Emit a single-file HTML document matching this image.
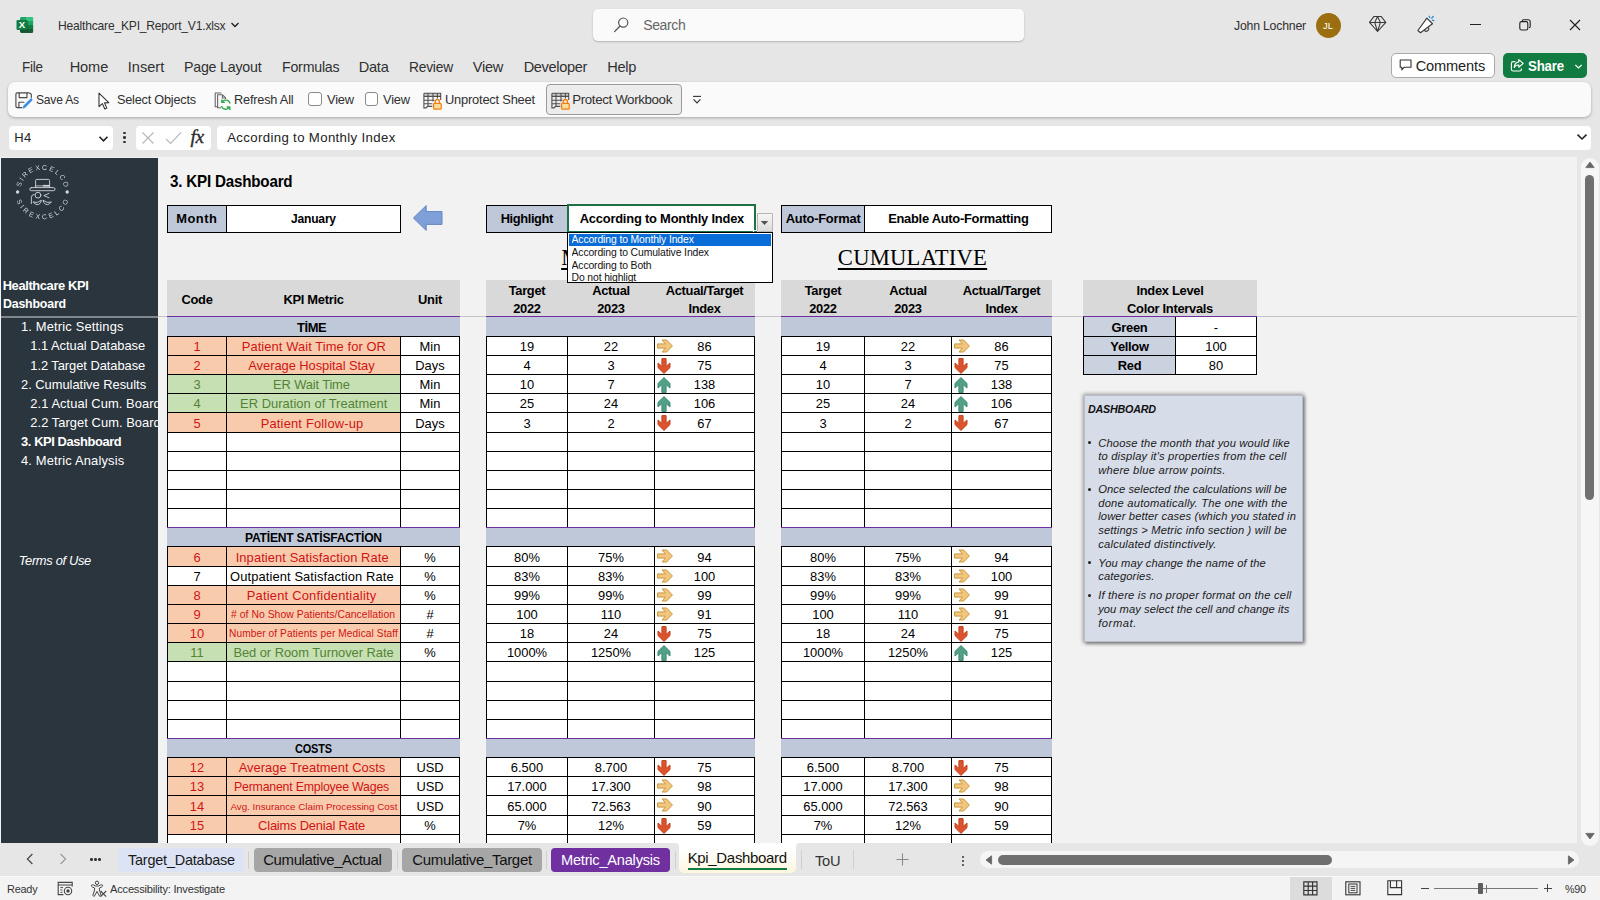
<!DOCTYPE html>
<html lang="en"><head><meta charset="utf-8"><title>Healthcare_KPI_Report_V1.xlsx - Excel</title>
<style>
html,body{margin:0;padding:0}
body{width:1600px;height:900px;position:relative;overflow:hidden;background:#e6e6e6;font-family:'Liberation Sans',sans-serif;font-size:13px;color:#000}
div{position:absolute;box-sizing:border-box}
svg{overflow:visible}
.dd{left:3.5px;height:12.6px;line-height:13px;font-size:10.4px;color:#111;white-space:nowrap;overflow:hidden;width:198px;letter-spacing:-.12px}
</style></head>
<body>
<svg style="position:absolute;left:15px;top:15px" width="20" height="19" viewBox="0 0 20 19">
<defs><clipPath id="xlc"><rect x="5" y="1.9" width="13.4" height="16.1" rx="1.4"/></clipPath></defs>
<g clip-path="url(#xlc)">
<rect x="5" y="1.9" width="6.7" height="4.1" fill="#21a366"/><rect x="11.7" y="1.9" width="6.7" height="4.1" fill="#33c481"/>
<rect x="5" y="6" width="6.7" height="4" fill="#107c41"/><rect x="11.7" y="6" width="6.7" height="4" fill="#21a366"/>
<rect x="5" y="10" width="6.7" height="4" fill="#185c37"/><rect x="11.7" y="10" width="6.7" height="4" fill="#107c41"/>
<rect x="5" y="14" width="13.4" height="4" fill="#185c37"/>
<rect x="5" y="5.6" width="8.2" height="10.6" rx="1" fill="#000" opacity=".18"/>
</g>
<rect x="1.5" y="5" width="11" height="10" rx="1.1" fill="#107c41"/>
<text x="6.95" y="13.35" font-family="'Liberation Sans',sans-serif" font-size="9.6" font-weight="700" fill="#fff" text-anchor="middle">X</text>
</svg>
<div style="left:57.70px;top:15.50px;height:20px;line-height:20px;font-size:13.2px;color:#303030;white-space:nowrap;letter-spacing:-0.22px;transform:scaleX(0.916);transform-origin:0 50%;">Healthcare_KPI_Report_V1.xlsx</div>
<svg style="position:absolute;left:230px;top:21px" width="10" height="8" viewBox="0 0 10 8"><path d="M1.5 2 L5 5.5 L8.5 2" fill="none" stroke="#222" stroke-width="1.4"/></svg>
<div style="left:592.5px;top:9px;width:431.5px;height:32px;background:#fafafa;border-radius:5px;box-shadow:0 1px 2px rgba(0,0,0,.22)"></div>
<svg style="position:absolute;left:613px;top:16px" width="17" height="17" viewBox="0 0 17 17"><circle cx="10.2" cy="6.6" r="4.6" fill="none" stroke="#555" stroke-width="1.2"/><path d="M7 10 L1.6 15.6" stroke="#555" stroke-width="1.3" stroke-linecap="round"/></svg>
<div style="left:643.20px;top:14.50px;height:20px;line-height:20px;font-size:14px;color:#666;white-space:nowrap;letter-spacing:-0.352px;">Search</div>
<div style="left:1234.20px;top:15.50px;height:20px;line-height:20px;font-size:13.2px;color:#303030;white-space:nowrap;letter-spacing:-0.22px;transform:scaleX(0.9303);transform-origin:0 50%;">John Lochner</div>
<div style="left:1315.5px;top:12.5px;width:25px;height:25px;background:#9b6f10;border-radius:50%"></div>
<div style="left:1315.5px;top:15.50px;width:25.0px;height:20px;line-height:20px;text-align:center;font-size:9.5px;font-weight:400;color:#fff;white-space:nowrap;">JL</div>
<svg style="position:absolute;left:1368px;top:15px" width="19" height="18" viewBox="0 0 19 18"><path d="M6 1.4 H13.1 L17.8 7.4 L9.55 16.5 L1.5 7.4 Z M1.5 7.4 H17.8 M6.7 7.4 L9.55 16.5 L12.4 7.4 M6.7 7.4 L9.55 1.4 L12.4 7.4" fill="none" stroke="#3a3a3a" stroke-width="1.05" stroke-linejoin="round"/></svg>
<svg style="position:absolute;left:1416px;top:15px" width="20" height="20" viewBox="0 0 20 20"><path d="M8.2 15 A2.3 2.3 0 0 0 12.4 12.4" fill="none" stroke="#3a3a3a" stroke-width="1.1"/><path d="M10.9 3.1 L16.5 8.75 L4.5 17.75 L1.9 15.5 Z" fill="#fff" stroke="#3a3a3a" stroke-width="1.15" stroke-linejoin="round"/><path d="M13.2 1.2 L13.8 2.5 M17.2 1.5 L15.7 3.2 M17.8 5.6 L16.4 5.1" stroke="#1a86d8" stroke-width="1.2" stroke-linecap="round"/></svg>
<div style="left:1470px;top:24px;width:10.5px;height:1.2px;background:#222"></div>
<svg style="position:absolute;left:1519px;top:19px" width="12" height="12" viewBox="0 0 12 12"><rect x="0.8" y="2.6" width="8" height="8.4" rx="1.8" fill="none" stroke="#222" stroke-width="1.1"/><path d="M3.2 2.4 V2 Q3.2 0.7 4.6 0.7 H9.2 Q11.2 0.7 11.2 2.7 V7.4 Q11.2 8.6 10 8.6" fill="none" stroke="#222" stroke-width="1.1"/></svg>
<svg style="position:absolute;left:1569px;top:19px" width="12" height="12" viewBox="0 0 12 12"><path d="M1 1 L11 11 M11 1 L1 11" stroke="#222" stroke-width="1.15"/></svg>
<div style="left:22.20px;top:56.50px;height:20px;line-height:20px;font-size:14.6px;color:#303030;white-space:nowrap;letter-spacing:-0.22px;transform:scaleX(0.9232);transform-origin:0 50%;">File</div>
<div style="left:69.70px;top:56.50px;height:20px;line-height:20px;font-size:14.6px;color:#303030;white-space:nowrap;letter-spacing:-0.112px;">Home</div>
<div style="left:127.70px;top:56.50px;height:20px;line-height:20px;font-size:14.6px;color:#303030;white-space:nowrap;letter-spacing:0.02px;">Insert</div>
<div style="left:183.70px;top:56.50px;height:20px;line-height:20px;font-size:14.6px;color:#303030;white-space:nowrap;letter-spacing:-0.22px;transform:scaleX(0.9728);transform-origin:0 50%;">Page Layout</div>
<div style="left:281.70px;top:56.50px;height:20px;line-height:20px;font-size:14.6px;color:#303030;white-space:nowrap;letter-spacing:-0.22px;transform:scaleX(0.9715);transform-origin:0 50%;">Formulas</div>
<div style="left:358.70px;top:56.50px;height:20px;line-height:20px;font-size:14.6px;color:#303030;white-space:nowrap;letter-spacing:-0.243px;">Data</div>
<div style="left:408.70px;top:56.50px;height:20px;line-height:20px;font-size:14.6px;color:#303030;white-space:nowrap;letter-spacing:-0.22px;transform:scaleX(0.9431);transform-origin:0 50%;">Review</div>
<div style="left:472.70px;top:56.50px;height:20px;line-height:20px;font-size:14.6px;color:#303030;white-space:nowrap;letter-spacing:-0.258px;">View</div>
<div style="left:523.70px;top:56.50px;height:20px;line-height:20px;font-size:14.6px;color:#303030;white-space:nowrap;letter-spacing:-0.366px;">Developer</div>
<div style="left:607.20px;top:56.50px;height:20px;line-height:20px;font-size:14.6px;color:#303030;white-space:nowrap;letter-spacing:-0.305px;">Help</div>
<div style="left:1391px;top:53px;width:103.5px;height:25px;background:#fff;border:1px solid #a9a9a9;border-radius:5px"></div>
<svg style="position:absolute;left:1399px;top:59px" width="14" height="13" viewBox="0 0 14 13"><path d="M1.2 1 H12 V8.2 H5.2 L2.8 10.8 V8.2 H1.2 Z" fill="none" stroke="#333" stroke-width="1.1" stroke-linejoin="round"/></svg>
<div style="left:1415.70px;top:56.00px;height:20px;line-height:20px;font-size:14.6px;color:#222;white-space:nowrap;letter-spacing:-0.138px;">Comments</div>
<div style="left:1503.3px;top:53px;width:84.2px;height:25px;background:#107c41;border-radius:5px"></div>
<svg style="position:absolute;left:1510px;top:58px" width="15" height="15" viewBox="0 0 15 15"><path d="M5.4 3.6 H3.2 Q1.4 3.6 1.4 5.4 V11.2 Q1.4 13 3.2 13 H9.6 Q11.4 13 11.4 11.2 V10.4" fill="none" stroke="#fff" stroke-width="1.15"/><path d="M8.8 1.6 L13.2 5.4 L8.8 9.2 V7 Q5.6 6.8 4.2 9.6 Q4.4 4.6 8.8 3.9 Z" fill="none" stroke="#fff" stroke-width="1.15" stroke-linejoin="round"/></svg>
<div style="left:1528.20px;top:56.00px;height:20px;line-height:20px;font-size:14.6px;color:#fff;white-space:nowrap;font-weight:700;letter-spacing:-0.22px;transform:scaleX(0.9097);transform-origin:0 50%;-webkit-text-stroke:0;">Share</div>
<svg style="position:absolute;left:1574px;top:63px" width="9" height="7" viewBox="0 0 9 7"><path d="M1.3 1.8 L4.5 5 L7.7 1.8" fill="none" stroke="#fff" stroke-width="1.2"/></svg>
<div style="left:8px;top:82px;width:1583px;height:34.5px;background:#fafafa;border-radius:7px;box-shadow:0 1px 3px rgba(0,0,0,.28)"></div>
<svg style="position:absolute;left:14px;top:90px" width="20" height="20" viewBox="0 0 20 20">
<g fill="none" stroke="#4a4a4a" stroke-width="1.15" stroke-linejoin="round" stroke-linecap="round">
<path d="M8.4 17.6 H3.3 Q1.9 17.6 1.9 16.2 V4.2 Q1.9 2.8 3.3 2.8 H14.6 Q16.3 2.8 17.3 4.4 V8.6"/>
<path d="M5.2 3 V7.6 H13 V3"/><path d="M4.9 17.4 V12.2 H10"/></g>
<path d="M8.3 18.9 L9.1 15.7 L16.3 8.5 Q17.3 7.7 18.3 8.7 Q19.1 9.7 18.3 10.7 L11.3 17.9 Z" fill="#3a8ee6" stroke="#fafafa" stroke-width=".5"/></svg>
<div style="left:36.20px;top:89.50px;height:20px;line-height:20px;font-size:13.3px;color:#303030;white-space:nowrap;letter-spacing:-0.22px;transform:scaleX(0.9078);transform-origin:0 50%;">Save As</div>
<svg style="position:absolute;left:96px;top:91px" width="16" height="20" viewBox="0 0 16 20"><path d="M3 2.2 V15.6 L6.4 12.6 L8.8 18 L10.8 17.1 L8.5 11.9 L12.8 11.6 Z" fill="#fff" stroke="#333" stroke-width="1.1" stroke-linejoin="round"/></svg>
<div style="left:117.20px;top:89.50px;height:20px;line-height:20px;font-size:13.3px;color:#303030;white-space:nowrap;letter-spacing:-0.22px;transform:scaleX(0.9545);transform-origin:0 50%;">Select Objects</div>
<svg style="position:absolute;left:213px;top:90px" width="20" height="21" viewBox="0 0 20 21">
<g fill="none" stroke="#666" stroke-width="1.1" stroke-linejoin="round">
<path d="M4 16.8 H2.2 V3 H8.4"/><path d="M8 17.8 H4.6 V4.8 H9.6 L12.6 7.8 V9"/><path d="M9.4 5 V8 H12.4"/></g>
<g fill="none" stroke="#2fa84f" stroke-width="1.35" stroke-linecap="round" stroke-linejoin="round">
<path d="M16.9 13 A4.4 4.4 0 0 0 9 12.2 M8.8 9.8 V12.4 H11.4"/><path d="M8.7 16.4 A4.4 4.4 0 0 0 16.6 17.2 M16.8 19.6 V17 H14.2"/></g></svg>
<div style="left:233.70px;top:89.50px;height:20px;line-height:20px;font-size:13.3px;color:#303030;white-space:nowrap;letter-spacing:-0.22px;transform:scaleX(0.9598);transform-origin:0 50%;">Refresh All</div>
<div style="left:308.2px;top:92.2px;width:13.6px;height:13.6px;background:#fff;border:1px solid #8a8a8a;border-radius:3px"></div>
<div style="left:326.70px;top:89.50px;height:20px;line-height:20px;font-size:13.3px;color:#303030;white-space:nowrap;letter-spacing:-0.22px;transform:scaleX(0.9702);transform-origin:0 50%;">View</div>
<div style="left:364.8px;top:92.2px;width:13.6px;height:13.6px;background:#fff;border:1px solid #8a8a8a;border-radius:3px"></div>
<div style="left:383.20px;top:89.50px;height:20px;line-height:20px;font-size:13.3px;color:#303030;white-space:nowrap;letter-spacing:-0.22px;transform:scaleX(0.9702);transform-origin:0 50%;">View</div>
<svg style="position:absolute;left:423px;top:91px" width="20" height="20" viewBox="0 0 20 20">
<rect x="0.9" y="2.2" width="16.8" height="3.2" fill="#8a8a8a" opacity=".35"/>
<path d="M0.9 2.2 H17.7 V9 M0.9 2.2 V16.9 H3.2 L4.4 15.4 H9.4 M0.9 5.4 H17.7 M0.9 9.2 H11.4 M0.9 12.8 H9.4 M5 2.2 V15.4 M10 2.2 V10.4 M14.4 2.2 V7.6" fill="none" stroke="#4f4f4f" stroke-width="1.1"/>
<rect x="10.6" y="12.4" width="7.6" height="5.8" rx=".9" fill="#fbdc9a" stroke="#f07f0c" stroke-width="1.2"/><path d="M12.3 12.2 V10.8 Q12.3 8.5 14.4 8.5 Q16.5 8.5 16.5 10.8 V12.2" fill="none" stroke="#f07f0c" stroke-width="1.3"/></svg>
<div style="left:444.70px;top:89.50px;height:20px;line-height:20px;font-size:13.3px;color:#303030;white-space:nowrap;letter-spacing:-0.22px;transform:scaleX(0.9687);transform-origin:0 50%;">Unprotect Sheet</div>
<div style="left:546px;top:83.5px;width:136px;height:31px;background:#ececec;border:1px solid #9a9a9a;border-radius:4px"></div>
<svg style="position:absolute;left:551px;top:91px" width="20" height="20" viewBox="0 0 20 20">
<rect x="0.9" y="2.2" width="16.8" height="3.2" fill="#8a8a8a" opacity=".35"/>
<path d="M0.9 2.2 H17.7 V9 M0.9 2.2 V16.9 H3.2 L4.4 15.4 H9.4 M0.9 5.4 H17.7 M0.9 9.2 H11.4 M0.9 12.8 H9.4 M5 2.2 V15.4 M10 2.2 V10.4 M14.4 2.2 V7.6" fill="none" stroke="#4f4f4f" stroke-width="1.1"/>
<rect x="10.6" y="12.4" width="7.6" height="5.8" rx=".9" fill="#fbdc9a" stroke="#f07f0c" stroke-width="1.2"/><path d="M12.3 12.2 V10.8 Q12.3 8.5 14.4 8.5 Q16.5 8.5 16.5 10.8 V12.2" fill="none" stroke="#f07f0c" stroke-width="1.3"/></svg>
<div style="left:572.20px;top:89.50px;height:20px;line-height:20px;font-size:13.3px;color:#303030;white-space:nowrap;letter-spacing:-0.356px;">Protect Workbook</div>
<svg style="position:absolute;left:692px;top:95px" width="10" height="10" viewBox="0 0 10 10"><path d="M1 1.4 H9" stroke="#333" stroke-width="1.1"/><path d="M1.6 4.4 L5 7.8 L8.4 4.4" fill="none" stroke="#333" stroke-width="1.2"/></svg>
<div style="left:9px;top:126px;width:104px;height:23.5px;background:#fff;border-radius:4px"></div>
<div style="left:14.20px;top:127.50px;height:20px;line-height:20px;font-size:13px;color:#222;white-space:nowrap;letter-spacing:0.475px;">H4</div>
<svg style="position:absolute;left:98.3px;top:134.5px" width="11" height="8" viewBox="0 0 11 8"><path d="M1.5 1.8 L5.5 5.8 L9.5 1.8" fill="none" stroke="#222" stroke-width="1.6"/></svg>
<div style="left:123px;top:131.8px;width:2.6px;height:2.6px;background:#333;border-radius:50%"></div>
<div style="left:123px;top:136.2px;width:2.6px;height:2.6px;background:#333;border-radius:50%"></div>
<div style="left:123px;top:140.6px;width:2.6px;height:2.6px;background:#333;border-radius:50%"></div>
<div style="left:136px;top:126px;width:75px;height:23.5px;background:#fff;border-radius:4px"></div>
<svg style="position:absolute;left:141px;top:131px" width="14" height="14" viewBox="0 0 14 14"><path d="M1.5 1.5 L12.5 12.5 M12.5 1.5 L1.5 12.5" stroke="#b8b8b8" stroke-width="1.2"/></svg>
<svg style="position:absolute;left:165px;top:131px" width="17" height="14" viewBox="0 0 17 14"><path d="M1 8 L5.6 12.4 L16 1.4" fill="none" stroke="#b8b8b8" stroke-width="1.2"/></svg>
<div style="left:190.5px;top:126.6px;width:22px;height:20px;line-height:20px;font-family:'Liberation Serif',serif;font-style:italic;font-size:19.5px;color:#2a2a2a;letter-spacing:-.3px;-webkit-text-stroke:.35px #2a2a2a">fx</div>
<div style="left:217px;top:126px;width:1374px;height:23.5px;background:#fff;border-radius:4px"></div>
<div style="left:227.20px;top:127.50px;height:20px;line-height:20px;font-size:13.2px;color:#222;white-space:nowrap;letter-spacing:0.361px;">According to Monthly Index</div>
<svg style="position:absolute;left:1576px;top:133px" width="12" height="8" viewBox="0 0 12 8"><path d="M1.5 1.6 L6 6 L10.5 1.6" fill="none" stroke="#222" stroke-width="1.6"/></svg>
<div style="left:0px;top:157px;width:1577.3px;height:686px;background:#f2f2f2"></div>
<div style="left:1px;top:157.5px;width:156.5px;height:686px;background:#2b353e"></div>
<svg style="position:absolute;left:12px;top:162px;will-change:transform" width="60" height="60" viewBox="12 162 60 60" font-family="'Liberation Sans',sans-serif" fill="#d3d7da">
<defs><path id="arcT" d="M 20.96 186.23 A 22.3 22.3 0 0 1 64.04 186.23"/><path id="arcB" d="M 16.13 199.07 A 27.3 27.3 0 0 0 68.87 199.07"/></defs>
<text font-size="6.9" letter-spacing="1.75" text-anchor="middle" opacity=".99"><textPath href="#arcT" startOffset="51.6%">SIREXCELCO</textPath></text>
<text font-size="6.9" letter-spacing="2.6" text-anchor="middle" opacity=".99"><textPath href="#arcB" startOffset="51.8%">SIREXCELCO</textPath></text>
<circle cx="17.6" cy="192" r="1.7"/><circle cx="67.2" cy="192" r="1.7"/>
<g fill="none" stroke="#d3d7da" stroke-width="0.9" stroke-linejoin="round" stroke-linecap="round">
<path d="M35.6 187.4 V180.6 Q35.6 179.4 36.8 179.4 H48.4 Q49.6 179.4 49.6 180.6 V187.4"/>
<rect x="29.8" y="187.6" width="25.2" height="3.1" rx="1.55"/>
<path d="M35.8 185.9 H49.4" stroke-width="0.8"/><path d="M43 185.7 H49.4" stroke-width="1.6" stroke-linecap="butt"/>
<circle cx="38" cy="195.2" r="2.9"/>
<path d="M31.4 203.6 V197.2 Q31.4 194.6 34.2 194.4"/>
<path d="M49 193.4 L43.8 195.6 L49 197.8"/>
<path d="M33.4 202.2 Q37.6 203.6 41.4 200.2 Q40.6 204.6 37 204.6 Q34.6 204.4 33.4 202.2 Z"/>
<path d="M51 202.2 Q46.8 203.6 43 200.2 Q43.8 204.6 47.4 204.6 Q49.8 204.4 51 202.2 Z"/>
</g></svg>
<div style="left:2.70px;top:275.50px;height:20px;line-height:20px;font-size:12.9px;color:#fff;white-space:nowrap;font-weight:700;letter-spacing:-0.377px;">Healthcare KPI</div>
<div style="left:2.70px;top:293.50px;height:20px;line-height:20px;font-size:12.9px;color:#fff;white-space:nowrap;font-weight:700;letter-spacing:-0.22px;transform:scaleX(0.9621);transform-origin:0 50%;">Dashboard</div>
<div style="left:1px;top:317px;width:156.5px;height:160px;overflow:hidden">
<div style="left:20.00px;top:0.20px;height:20px;line-height:20px;font-size:12.9px;color:#fff;white-space:nowrap;letter-spacing:0.171px;">1. Metric Settings</div>
<div style="left:29.30px;top:19.35px;height:20px;line-height:20px;font-size:12.9px;color:#fff;white-space:nowrap;letter-spacing:-0.027px;">1.1 Actual Database</div>
<div style="left:29.30px;top:38.50px;height:20px;line-height:20px;font-size:12.9px;color:#fff;white-space:nowrap;letter-spacing:-0.053px;">1.2 Target Database</div>
<div style="left:20.00px;top:57.65px;height:20px;line-height:20px;font-size:12.9px;color:#fff;white-space:nowrap;letter-spacing:-0.015px;">2. Cumulative Results</div>
<div style="left:29.30px;top:76.80px;height:20px;line-height:20px;font-size:12.9px;color:#fff;white-space:nowrap;letter-spacing:0.076px;">2.1 Actual Cum. Board</div>
<div style="left:29.30px;top:95.95px;height:20px;line-height:20px;font-size:12.9px;color:#fff;white-space:nowrap;letter-spacing:0.052px;">2.2 Target Cum. Board</div>
<div style="left:20.00px;top:115.10px;height:20px;line-height:20px;font-size:12.9px;color:#fff;white-space:nowrap;font-weight:700;letter-spacing:-0.402px;">3. KPI Dashboard</div>
<div style="left:20.00px;top:134.25px;height:20px;line-height:20px;font-size:12.9px;color:#fff;white-space:nowrap;letter-spacing:0.171px;">4. Metric Analysis</div>
</div>
<div style="left:18.70px;top:550.50px;height:20px;line-height:20px;font-size:12.9px;color:#fff;white-space:nowrap;font-style:italic;letter-spacing:-0.326px;">Terms of Use</div>
<div style="left:169.70px;top:170.60px;height:20px;line-height:20px;font-size:16.4px;color:#000;white-space:nowrap;font-weight:700;letter-spacing:-0.22px;transform:scaleX(0.9259);transform-origin:0 50%;">3. KPI Dashboard</div>
<div style="left:167px;top:205px;width:234px;height:28px;background:#fff;border:1px solid #000"></div>
<div style="left:168px;top:206px;width:58px;height:26px;background:#bfc8d9"></div>
<div style="left:226px;top:205px;width:1px;height:28px;background:#000"></div>
<div style="left:176.20px;top:208.50px;height:20px;line-height:20px;font-size:12.9px;color:#000;white-space:nowrap;font-weight:700;letter-spacing:0.486px;">Month</div>
<div style="left:290.70px;top:208.50px;height:20px;line-height:20px;font-size:12.9px;color:#000;white-space:nowrap;font-weight:700;letter-spacing:-0.22px;transform:scaleX(0.937);transform-origin:0 50%;">January</div>
<svg style="position:absolute;left:412px;top:204px" width="32" height="28" viewBox="0 0 32 28"><path d="M1.4 14 L14.2 1.6 V7.6 H30 V20.4 H14.2 V26.4 Z" fill="#7f9fd8" stroke="#6486c4" stroke-width="1"/></svg>
<div style="left:486px;top:205px;width:269px;height:28px;background:#fff;border:1px solid #000"></div>
<div style="left:487px;top:206px;width:80px;height:26px;background:#bfc8d9"></div>
<div style="left:567px;top:205px;width:1px;height:28px;background:#000"></div>
<div style="left:500.70px;top:208.50px;height:20px;line-height:20px;font-size:12.9px;color:#000;white-space:nowrap;font-weight:700;letter-spacing:-0.405px;">Highlight</div>
<div style="left:566.5px;top:203.5px;width:189.5px;height:29.5px;background:#fff;border:2px solid #1e7145"></div>
<div style="left:579.70px;top:208.50px;height:20px;line-height:20px;font-size:12.9px;color:#000;white-space:nowrap;font-weight:700;letter-spacing:-0.205px;">According to Monthly Index</div>
<div style="left:753px;top:229.5px;width:4.5px;height:4.5px;background:#1e7145;border:1px solid #fff"></div>
<div style="left:756.5px;top:213px;width:16px;height:18.5px;background:linear-gradient(#f6f6f6,#dcdcdc);border:1px solid #b4b4b4;border-radius:1px"></div>
<svg style="position:absolute;left:760px;top:220px" width="9" height="6" viewBox="0 0 9 6"><path d="M0.8 1 H8.2 L4.5 5 Z" fill="#555"/></svg>
<div style="left:781px;top:205px;width:271px;height:28px;background:#fff;border:1px solid #000"></div>
<div style="left:782px;top:206px;width:82px;height:26px;background:#bfc8d9"></div>
<div style="left:864px;top:205px;width:1px;height:28px;background:#000"></div>
<div style="left:785.70px;top:208.50px;height:20px;line-height:20px;font-size:12.9px;color:#000;white-space:nowrap;font-weight:700;letter-spacing:-0.224px;">Auto-Format</div>
<div style="left:888.20px;top:208.50px;height:20px;line-height:20px;font-size:12.9px;color:#000;white-space:nowrap;font-weight:700;letter-spacing:-0.273px;">Enable Auto-Formatting</div>
<div style="left:484px;top:242.50px;width:264px;height:30px;line-height:30px;text-align:center;font-size:22.4px;font-weight:400;color:#000;white-space:nowrap;font-family:'Liberation Serif',serif;text-decoration:underline;text-decoration-thickness:1.6px;text-underline-offset:2.5px;">MONTHLY</div>
<div style="left:781px;top:242.50px;width:263px;height:30px;line-height:30px;text-align:center;font-size:22.6px;font-weight:400;color:#000;white-space:nowrap;font-family:'Liberation Serif',serif;letter-spacing:0.25px;text-decoration:underline;text-decoration-thickness:1.6px;text-underline-offset:2.5px;">CUMULATIVE</div>
<div style="left:157.5px;top:316px;width:1419.8px;height:1px;background:#c4c4c4"></div>
<div style="left:1px;top:315.8px;width:156.5px;height:1.8px;background:#80868b"></div>
<div style="left:167px;top:280px;width:293px;height:36px;background:#d9d9d9"></div>
<div style="left:167px;top:316px;width:293px;height:1px;background:#7030a0"></div>
<div style="left:167px;top:289.50px;width:60px;height:20px;line-height:20px;text-align:center;font-size:12.9px;font-weight:700;color:#000;white-space:nowrap;letter-spacing:-0.29px;">Code</div>
<div style="left:226px;top:289.50px;width:175px;height:20px;line-height:20px;text-align:center;font-size:12.9px;font-weight:700;color:#000;white-space:nowrap;letter-spacing:-0.29px;">KPI Metric</div>
<div style="left:400px;top:289.50px;width:60px;height:20px;line-height:20px;text-align:center;font-size:12.9px;font-weight:700;color:#000;white-space:nowrap;letter-spacing:-0.29px;">Unit</div>
<div style="left:486px;top:280px;width:269px;height:36px;background:#d9d9d9"></div>
<div style="left:486px;top:316px;width:269px;height:1px;background:#7030a0"></div>
<div style="left:486px;top:280.50px;width:82px;height:20px;line-height:20px;text-align:center;font-size:12.9px;font-weight:700;color:#000;white-space:nowrap;letter-spacing:-0.29px;">Target</div>
<div style="left:486px;top:298.50px;width:82px;height:20px;line-height:20px;text-align:center;font-size:12.9px;font-weight:700;color:#000;white-space:nowrap;letter-spacing:-0.29px;">2022</div>
<div style="left:567px;top:280.50px;width:88px;height:20px;line-height:20px;text-align:center;font-size:12.9px;font-weight:700;color:#000;white-space:nowrap;letter-spacing:-0.29px;">Actual</div>
<div style="left:567px;top:298.50px;width:88px;height:20px;line-height:20px;text-align:center;font-size:12.9px;font-weight:700;color:#000;white-space:nowrap;letter-spacing:-0.29px;">2023</div>
<div style="left:654px;top:280.50px;width:101px;height:20px;line-height:20px;text-align:center;font-size:12.9px;font-weight:700;color:#000;white-space:nowrap;letter-spacing:-0.29px;">Actual/Target</div>
<div style="left:654px;top:298.50px;width:101px;height:20px;line-height:20px;text-align:center;font-size:12.9px;font-weight:700;color:#000;white-space:nowrap;letter-spacing:-0.29px;">Index</div>
<div style="left:781px;top:280px;width:271px;height:36px;background:#d9d9d9"></div>
<div style="left:781px;top:316px;width:271px;height:1px;background:#7030a0"></div>
<div style="left:781px;top:280.50px;width:84px;height:20px;line-height:20px;text-align:center;font-size:12.9px;font-weight:700;color:#000;white-space:nowrap;letter-spacing:-0.29px;">Target</div>
<div style="left:781px;top:298.50px;width:84px;height:20px;line-height:20px;text-align:center;font-size:12.9px;font-weight:700;color:#000;white-space:nowrap;letter-spacing:-0.29px;">2022</div>
<div style="left:864px;top:280.50px;width:88px;height:20px;line-height:20px;text-align:center;font-size:12.9px;font-weight:700;color:#000;white-space:nowrap;letter-spacing:-0.29px;">Actual</div>
<div style="left:864px;top:298.50px;width:88px;height:20px;line-height:20px;text-align:center;font-size:12.9px;font-weight:700;color:#000;white-space:nowrap;letter-spacing:-0.29px;">2023</div>
<div style="left:951px;top:280.50px;width:101px;height:20px;line-height:20px;text-align:center;font-size:12.9px;font-weight:700;color:#000;white-space:nowrap;letter-spacing:-0.29px;">Actual/Target</div>
<div style="left:951px;top:298.50px;width:101px;height:20px;line-height:20px;text-align:center;font-size:12.9px;font-weight:700;color:#000;white-space:nowrap;letter-spacing:-0.29px;">Index</div>
<div style="left:1083px;top:280px;width:174px;height:36px;background:#d9d9d9"></div>
<div style="left:1083px;top:316px;width:174px;height:1px;background:#7030a0"></div>
<div style="left:1083px;top:280.50px;width:174px;height:20px;line-height:20px;text-align:center;font-size:12.9px;font-weight:700;color:#000;white-space:nowrap;letter-spacing:-0.29px;">Index Level</div>
<div style="left:1083px;top:298.50px;width:174px;height:20px;line-height:20px;text-align:center;font-size:12.9px;font-weight:700;color:#000;white-space:nowrap;letter-spacing:-0.29px;">Color Intervals</div>
<div style="left:1083px;top:317px;width:174px;height:58px;background:#fff;border:1px solid #000;border-top:none"></div>
<div style="left:1084px;top:317px;width:91px;height:57px;background:#cbd2df"></div>
<div style="left:1175px;top:317px;width:1px;height:58px;background:#000"></div>
<div style="left:1083px;top:336px;width:174px;height:1px;background:#000"></div>
<div style="left:1083px;top:355px;width:174px;height:1px;background:#000"></div>
<div style="left:1084px;top:317.50px;width:91px;height:20px;line-height:20px;text-align:center;font-size:12.9px;font-weight:700;color:#000;white-space:nowrap;letter-spacing:-0.29px;">Green</div>
<div style="left:1176px;top:317.50px;width:80px;height:20px;line-height:20px;text-align:center;font-size:12.9px;font-weight:400;color:#000;white-space:nowrap;">-</div>
<div style="left:1084px;top:336.65px;width:91px;height:20px;line-height:20px;text-align:center;font-size:12.9px;font-weight:700;color:#000;white-space:nowrap;letter-spacing:-0.29px;">Yellow</div>
<div style="left:1176px;top:336.65px;width:80px;height:20px;line-height:20px;text-align:center;font-size:12.9px;font-weight:400;color:#000;white-space:nowrap;">100</div>
<div style="left:1084px;top:355.80px;width:91px;height:20px;line-height:20px;text-align:center;font-size:12.9px;font-weight:700;color:#000;white-space:nowrap;letter-spacing:-0.29px;">Red</div>
<div style="left:1176px;top:355.80px;width:80px;height:20px;line-height:20px;text-align:center;font-size:12.9px;font-weight:400;color:#000;white-space:nowrap;">80</div>
<div style="left:167px;top:317px;width:293px;height:19px;background:#bfc8d9"></div>
<div style="left:297.10px;top:317.60px;height:20px;line-height:20px;font-size:12.9px;color:#000;white-space:nowrap;font-weight:700;letter-spacing:-0.399px;">TİME</div>
<div style="left:167px;top:336px;width:293px;height:192px;background:#fff"></div>
<div style="left:486px;top:317px;width:269px;height:19px;background:#bfc8d9"></div>
<div style="left:486px;top:336px;width:269px;height:192px;background:#fff"></div>
<div style="left:781px;top:317px;width:271px;height:19px;background:#bfc8d9"></div>
<div style="left:781px;top:336px;width:271px;height:192px;background:#fff"></div>
<div style="left:167px;top:336px;width:234px;height:19px;background:#f8cbad"></div>
<div style="left:167px;top:337.00px;width:60px;height:20px;line-height:20px;text-align:center;font-size:12.9px;font-weight:400;color:#d01414;white-space:nowrap;">1</div>
<div style="left:241.70px;top:337.00px;height:20px;line-height:20px;font-size:12.9px;color:#d01414;white-space:nowrap;letter-spacing:0.092px;">Patient Wait Time for OR</div>
<div style="left:400px;top:337.00px;width:60px;height:20px;line-height:20px;text-align:center;font-size:12.9px;font-weight:400;color:#000;white-space:nowrap;">Min</div>
<div style="left:486px;top:337.00px;width:82px;height:20px;line-height:20px;text-align:center;font-size:12.9px;font-weight:400;color:#000;white-space:nowrap;">19</div>
<div style="left:567px;top:337.00px;width:88px;height:20px;line-height:20px;text-align:center;font-size:12.9px;font-weight:400;color:#000;white-space:nowrap;">22</div>
<div style="left:654px;top:337.00px;width:101px;height:20px;line-height:20px;text-align:center;font-size:12.9px;font-weight:400;color:#000;white-space:nowrap;">86</div>
<svg style="position:absolute;left:656.9px;top:339.4px" width="16" height="14" viewBox="0 0 16 13.4"><path d="M0.6 4.6 H8.4 L5 0.7 H9.6 L15.4 6.7 L9.6 12.7 H5 L8.4 8.8 H0.6 Z" fill="#f3c680" stroke="#c9983c" stroke-width="1" stroke-linejoin="round"/></svg>
<div style="left:781px;top:337.00px;width:84px;height:20px;line-height:20px;text-align:center;font-size:12.9px;font-weight:400;color:#000;white-space:nowrap;">19</div>
<div style="left:864px;top:337.00px;width:88px;height:20px;line-height:20px;text-align:center;font-size:12.9px;font-weight:400;color:#000;white-space:nowrap;">22</div>
<div style="left:951px;top:337.00px;width:101px;height:20px;line-height:20px;text-align:center;font-size:12.9px;font-weight:400;color:#000;white-space:nowrap;">86</div>
<svg style="position:absolute;left:953.9px;top:339.4px" width="16" height="14" viewBox="0 0 16 13.4"><path d="M0.6 4.6 H8.4 L5 0.7 H9.6 L15.4 6.7 L9.6 12.7 H5 L8.4 8.8 H0.6 Z" fill="#f3c680" stroke="#c9983c" stroke-width="1" stroke-linejoin="round"/></svg>
<div style="left:167px;top:355px;width:234px;height:19px;background:#f8cbad"></div>
<div style="left:167px;top:356.15px;width:60px;height:20px;line-height:20px;text-align:center;font-size:12.9px;font-weight:400;color:#d01414;white-space:nowrap;">2</div>
<div style="left:248.30px;top:356.15px;height:20px;line-height:20px;font-size:12.9px;color:#d01414;white-space:nowrap;letter-spacing:-0.046px;">Average Hospital Stay</div>
<div style="left:400px;top:356.15px;width:60px;height:20px;line-height:20px;text-align:center;font-size:12.9px;font-weight:400;color:#000;white-space:nowrap;">Days</div>
<div style="left:486px;top:356.15px;width:82px;height:20px;line-height:20px;text-align:center;font-size:12.9px;font-weight:400;color:#000;white-space:nowrap;">4</div>
<div style="left:567px;top:356.15px;width:88px;height:20px;line-height:20px;text-align:center;font-size:12.9px;font-weight:400;color:#000;white-space:nowrap;">3</div>
<div style="left:654px;top:356.15px;width:101px;height:20px;line-height:20px;text-align:center;font-size:12.9px;font-weight:400;color:#000;white-space:nowrap;">75</div>
<svg style="position:absolute;left:657.4px;top:358.09999999999997px" width="14" height="16" viewBox="0 0 13.4 16"><g transform="translate(13.4,0) rotate(90)"><path d="M0.6 4.6 H8.4 L5 0.7 H9.6 L15.4 6.7 L9.6 12.7 H5 L8.4 8.8 H0.6 Z" fill="#dc532d" stroke="#c2441f" stroke-width="1" stroke-linejoin="round"/></g></svg>
<div style="left:781px;top:356.15px;width:84px;height:20px;line-height:20px;text-align:center;font-size:12.9px;font-weight:400;color:#000;white-space:nowrap;">4</div>
<div style="left:864px;top:356.15px;width:88px;height:20px;line-height:20px;text-align:center;font-size:12.9px;font-weight:400;color:#000;white-space:nowrap;">3</div>
<div style="left:951px;top:356.15px;width:101px;height:20px;line-height:20px;text-align:center;font-size:12.9px;font-weight:400;color:#000;white-space:nowrap;">75</div>
<svg style="position:absolute;left:954.4px;top:358.09999999999997px" width="14" height="16" viewBox="0 0 13.4 16"><g transform="translate(13.4,0) rotate(90)"><path d="M0.6 4.6 H8.4 L5 0.7 H9.6 L15.4 6.7 L9.6 12.7 H5 L8.4 8.8 H0.6 Z" fill="#dc532d" stroke="#c2441f" stroke-width="1" stroke-linejoin="round"/></g></svg>
<div style="left:167px;top:374px;width:234px;height:19px;background:#c6e0b4"></div>
<div style="left:167px;top:375.30px;width:60px;height:20px;line-height:20px;text-align:center;font-size:12.9px;font-weight:400;color:#548235;white-space:nowrap;">3</div>
<div style="left:273.10px;top:375.30px;height:20px;line-height:20px;font-size:12.9px;color:#548235;white-space:nowrap;letter-spacing:-0.137px;">ER Wait Time</div>
<div style="left:400px;top:375.30px;width:60px;height:20px;line-height:20px;text-align:center;font-size:12.9px;font-weight:400;color:#000;white-space:nowrap;">Min</div>
<div style="left:486px;top:375.30px;width:82px;height:20px;line-height:20px;text-align:center;font-size:12.9px;font-weight:400;color:#000;white-space:nowrap;">10</div>
<div style="left:567px;top:375.30px;width:88px;height:20px;line-height:20px;text-align:center;font-size:12.9px;font-weight:400;color:#000;white-space:nowrap;">7</div>
<div style="left:654px;top:375.30px;width:101px;height:20px;line-height:20px;text-align:center;font-size:12.9px;font-weight:400;color:#000;white-space:nowrap;">138</div>
<svg style="position:absolute;left:657.4px;top:377.09999999999997px" width="14" height="16" viewBox="0 0 13.4 16"><g transform="translate(0,16) rotate(-90)"><path d="M0.6 4.6 H8.4 L5 0.7 H9.6 L15.4 6.7 L9.6 12.7 H5 L8.4 8.8 H0.6 Z" fill="#52a088" stroke="#3e8a72" stroke-width="1" stroke-linejoin="round"/></g></svg>
<div style="left:781px;top:375.30px;width:84px;height:20px;line-height:20px;text-align:center;font-size:12.9px;font-weight:400;color:#000;white-space:nowrap;">10</div>
<div style="left:864px;top:375.30px;width:88px;height:20px;line-height:20px;text-align:center;font-size:12.9px;font-weight:400;color:#000;white-space:nowrap;">7</div>
<div style="left:951px;top:375.30px;width:101px;height:20px;line-height:20px;text-align:center;font-size:12.9px;font-weight:400;color:#000;white-space:nowrap;">138</div>
<svg style="position:absolute;left:954.4px;top:377.09999999999997px" width="14" height="16" viewBox="0 0 13.4 16"><g transform="translate(0,16) rotate(-90)"><path d="M0.6 4.6 H8.4 L5 0.7 H9.6 L15.4 6.7 L9.6 12.7 H5 L8.4 8.8 H0.6 Z" fill="#52a088" stroke="#3e8a72" stroke-width="1" stroke-linejoin="round"/></g></svg>
<div style="left:167px;top:393px;width:234px;height:19px;background:#c6e0b4"></div>
<div style="left:167px;top:394.45px;width:60px;height:20px;line-height:20px;text-align:center;font-size:12.9px;font-weight:400;color:#548235;white-space:nowrap;">4</div>
<div style="left:240.10px;top:394.45px;height:20px;line-height:20px;font-size:12.9px;color:#548235;white-space:nowrap;letter-spacing:0.045px;">ER Duration of Treatment</div>
<div style="left:400px;top:394.45px;width:60px;height:20px;line-height:20px;text-align:center;font-size:12.9px;font-weight:400;color:#000;white-space:nowrap;">Min</div>
<div style="left:486px;top:394.45px;width:82px;height:20px;line-height:20px;text-align:center;font-size:12.9px;font-weight:400;color:#000;white-space:nowrap;">25</div>
<div style="left:567px;top:394.45px;width:88px;height:20px;line-height:20px;text-align:center;font-size:12.9px;font-weight:400;color:#000;white-space:nowrap;">24</div>
<div style="left:654px;top:394.45px;width:101px;height:20px;line-height:20px;text-align:center;font-size:12.9px;font-weight:400;color:#000;white-space:nowrap;">106</div>
<svg style="position:absolute;left:657.4px;top:396.09999999999997px" width="14" height="16" viewBox="0 0 13.4 16"><g transform="translate(0,16) rotate(-90)"><path d="M0.6 4.6 H8.4 L5 0.7 H9.6 L15.4 6.7 L9.6 12.7 H5 L8.4 8.8 H0.6 Z" fill="#52a088" stroke="#3e8a72" stroke-width="1" stroke-linejoin="round"/></g></svg>
<div style="left:781px;top:394.45px;width:84px;height:20px;line-height:20px;text-align:center;font-size:12.9px;font-weight:400;color:#000;white-space:nowrap;">25</div>
<div style="left:864px;top:394.45px;width:88px;height:20px;line-height:20px;text-align:center;font-size:12.9px;font-weight:400;color:#000;white-space:nowrap;">24</div>
<div style="left:951px;top:394.45px;width:101px;height:20px;line-height:20px;text-align:center;font-size:12.9px;font-weight:400;color:#000;white-space:nowrap;">106</div>
<svg style="position:absolute;left:954.4px;top:396.09999999999997px" width="14" height="16" viewBox="0 0 13.4 16"><g transform="translate(0,16) rotate(-90)"><path d="M0.6 4.6 H8.4 L5 0.7 H9.6 L15.4 6.7 L9.6 12.7 H5 L8.4 8.8 H0.6 Z" fill="#52a088" stroke="#3e8a72" stroke-width="1" stroke-linejoin="round"/></g></svg>
<div style="left:167px;top:412px;width:234px;height:20px;background:#f8cbad"></div>
<div style="left:167px;top:413.60px;width:60px;height:20px;line-height:20px;text-align:center;font-size:12.9px;font-weight:400;color:#d01414;white-space:nowrap;">5</div>
<div style="left:260.70px;top:413.60px;height:20px;line-height:20px;font-size:12.9px;color:#d01414;white-space:nowrap;letter-spacing:0.187px;">Patient Follow-up</div>
<div style="left:400px;top:413.60px;width:60px;height:20px;line-height:20px;text-align:center;font-size:12.9px;font-weight:400;color:#000;white-space:nowrap;">Days</div>
<div style="left:486px;top:413.60px;width:82px;height:20px;line-height:20px;text-align:center;font-size:12.9px;font-weight:400;color:#000;white-space:nowrap;">3</div>
<div style="left:567px;top:413.60px;width:88px;height:20px;line-height:20px;text-align:center;font-size:12.9px;font-weight:400;color:#000;white-space:nowrap;">2</div>
<div style="left:654px;top:413.60px;width:101px;height:20px;line-height:20px;text-align:center;font-size:12.9px;font-weight:400;color:#000;white-space:nowrap;">67</div>
<svg style="position:absolute;left:657.4px;top:415.09999999999997px" width="14" height="16" viewBox="0 0 13.4 16"><g transform="translate(13.4,0) rotate(90)"><path d="M0.6 4.6 H8.4 L5 0.7 H9.6 L15.4 6.7 L9.6 12.7 H5 L8.4 8.8 H0.6 Z" fill="#dc532d" stroke="#c2441f" stroke-width="1" stroke-linejoin="round"/></g></svg>
<div style="left:781px;top:413.60px;width:84px;height:20px;line-height:20px;text-align:center;font-size:12.9px;font-weight:400;color:#000;white-space:nowrap;">3</div>
<div style="left:864px;top:413.60px;width:88px;height:20px;line-height:20px;text-align:center;font-size:12.9px;font-weight:400;color:#000;white-space:nowrap;">2</div>
<div style="left:951px;top:413.60px;width:101px;height:20px;line-height:20px;text-align:center;font-size:12.9px;font-weight:400;color:#000;white-space:nowrap;">67</div>
<svg style="position:absolute;left:954.4px;top:415.09999999999997px" width="14" height="16" viewBox="0 0 13.4 16"><g transform="translate(13.4,0) rotate(90)"><path d="M0.6 4.6 H8.4 L5 0.7 H9.6 L15.4 6.7 L9.6 12.7 H5 L8.4 8.8 H0.6 Z" fill="#dc532d" stroke="#c2441f" stroke-width="1" stroke-linejoin="round"/></g></svg>
<div style="left:167px;top:336px;width:293px;height:1px;background:#000"></div>
<div style="left:167px;top:355px;width:293px;height:1px;background:#000"></div>
<div style="left:167px;top:374px;width:293px;height:1px;background:#000"></div>
<div style="left:167px;top:393px;width:293px;height:1px;background:#000"></div>
<div style="left:167px;top:412px;width:293px;height:1px;background:#000"></div>
<div style="left:167px;top:432px;width:293px;height:1px;background:#000"></div>
<div style="left:167px;top:451px;width:293px;height:1px;background:#000"></div>
<div style="left:167px;top:470px;width:293px;height:1px;background:#000"></div>
<div style="left:167px;top:489px;width:293px;height:1px;background:#000"></div>
<div style="left:167px;top:508px;width:293px;height:1px;background:#000"></div>
<div style="left:167px;top:527px;width:293px;height:1px;background:#7030a0"></div>
<div style="left:167px;top:336px;width:1px;height:191px;background:#000"></div>
<div style="left:226px;top:336px;width:1px;height:191px;background:#000"></div>
<div style="left:400px;top:336px;width:1px;height:191px;background:#000"></div>
<div style="left:459px;top:336px;width:1px;height:191px;background:#000"></div>
<div style="left:486px;top:336px;width:269px;height:1px;background:#000"></div>
<div style="left:486px;top:355px;width:269px;height:1px;background:#000"></div>
<div style="left:486px;top:374px;width:269px;height:1px;background:#000"></div>
<div style="left:486px;top:393px;width:269px;height:1px;background:#000"></div>
<div style="left:486px;top:412px;width:269px;height:1px;background:#000"></div>
<div style="left:486px;top:432px;width:269px;height:1px;background:#000"></div>
<div style="left:486px;top:451px;width:269px;height:1px;background:#000"></div>
<div style="left:486px;top:470px;width:269px;height:1px;background:#000"></div>
<div style="left:486px;top:489px;width:269px;height:1px;background:#000"></div>
<div style="left:486px;top:508px;width:269px;height:1px;background:#000"></div>
<div style="left:486px;top:527px;width:269px;height:1px;background:#7030a0"></div>
<div style="left:486px;top:336px;width:1px;height:191px;background:#000"></div>
<div style="left:567px;top:336px;width:1px;height:191px;background:#000"></div>
<div style="left:654px;top:336px;width:1px;height:191px;background:#000"></div>
<div style="left:754px;top:336px;width:1px;height:191px;background:#000"></div>
<div style="left:781px;top:336px;width:271px;height:1px;background:#000"></div>
<div style="left:781px;top:355px;width:271px;height:1px;background:#000"></div>
<div style="left:781px;top:374px;width:271px;height:1px;background:#000"></div>
<div style="left:781px;top:393px;width:271px;height:1px;background:#000"></div>
<div style="left:781px;top:412px;width:271px;height:1px;background:#000"></div>
<div style="left:781px;top:432px;width:271px;height:1px;background:#000"></div>
<div style="left:781px;top:451px;width:271px;height:1px;background:#000"></div>
<div style="left:781px;top:470px;width:271px;height:1px;background:#000"></div>
<div style="left:781px;top:489px;width:271px;height:1px;background:#000"></div>
<div style="left:781px;top:508px;width:271px;height:1px;background:#000"></div>
<div style="left:781px;top:527px;width:271px;height:1px;background:#7030a0"></div>
<div style="left:781px;top:336px;width:1px;height:191px;background:#000"></div>
<div style="left:864px;top:336px;width:1px;height:191px;background:#000"></div>
<div style="left:951px;top:336px;width:1px;height:191px;background:#000"></div>
<div style="left:1051px;top:336px;width:1px;height:191px;background:#000"></div>
<div style="left:167px;top:528px;width:293px;height:19px;background:#bfc8d9"></div>
<div style="left:245.20px;top:528.40px;height:20px;line-height:20px;font-size:12.9px;color:#000;white-space:nowrap;font-weight:700;letter-spacing:-0.22px;transform:scaleX(0.9377);transform-origin:0 50%;">PATİENT SATİSFACTİON</div>
<div style="left:167px;top:546px;width:293px;height:193px;background:#fff"></div>
<div style="left:486px;top:528px;width:269px;height:19px;background:#bfc8d9"></div>
<div style="left:486px;top:546px;width:269px;height:193px;background:#fff"></div>
<div style="left:781px;top:528px;width:271px;height:19px;background:#bfc8d9"></div>
<div style="left:781px;top:546px;width:271px;height:193px;background:#fff"></div>
<div style="left:167px;top:546px;width:234px;height:20px;background:#f8cbad"></div>
<div style="left:167px;top:547.65px;width:60px;height:20px;line-height:20px;text-align:center;font-size:12.9px;font-weight:400;color:#d01414;white-space:nowrap;">6</div>
<div style="left:235.70px;top:547.65px;height:20px;line-height:20px;font-size:12.9px;color:#d01414;white-space:nowrap;letter-spacing:0.093px;">Inpatient Satisfaction Rate</div>
<div style="left:400px;top:547.65px;width:60px;height:20px;line-height:20px;text-align:center;font-size:12.9px;font-weight:400;color:#000;white-space:nowrap;">%</div>
<div style="left:486px;top:547.65px;width:82px;height:20px;line-height:20px;text-align:center;font-size:12.9px;font-weight:400;color:#000;white-space:nowrap;">80%</div>
<div style="left:567px;top:547.65px;width:88px;height:20px;line-height:20px;text-align:center;font-size:12.9px;font-weight:400;color:#000;white-space:nowrap;">75%</div>
<div style="left:654px;top:547.65px;width:101px;height:20px;line-height:20px;text-align:center;font-size:12.9px;font-weight:400;color:#000;white-space:nowrap;">94</div>
<svg style="position:absolute;left:656.9px;top:549.4px" width="16" height="14" viewBox="0 0 16 13.4"><path d="M0.6 4.6 H8.4 L5 0.7 H9.6 L15.4 6.7 L9.6 12.7 H5 L8.4 8.8 H0.6 Z" fill="#f3c680" stroke="#c9983c" stroke-width="1" stroke-linejoin="round"/></svg>
<div style="left:781px;top:547.65px;width:84px;height:20px;line-height:20px;text-align:center;font-size:12.9px;font-weight:400;color:#000;white-space:nowrap;">80%</div>
<div style="left:864px;top:547.65px;width:88px;height:20px;line-height:20px;text-align:center;font-size:12.9px;font-weight:400;color:#000;white-space:nowrap;">75%</div>
<div style="left:951px;top:547.65px;width:101px;height:20px;line-height:20px;text-align:center;font-size:12.9px;font-weight:400;color:#000;white-space:nowrap;">94</div>
<svg style="position:absolute;left:953.9px;top:549.4px" width="16" height="14" viewBox="0 0 16 13.4"><path d="M0.6 4.6 H8.4 L5 0.7 H9.6 L15.4 6.7 L9.6 12.7 H5 L8.4 8.8 H0.6 Z" fill="#f3c680" stroke="#c9983c" stroke-width="1" stroke-linejoin="round"/></svg>
<div style="left:167px;top:566.80px;width:60px;height:20px;line-height:20px;text-align:center;font-size:12.9px;font-weight:400;color:#000;white-space:nowrap;">7</div>
<div style="left:230.10px;top:566.80px;height:20px;line-height:20px;font-size:12.9px;color:#000;white-space:nowrap;letter-spacing:0.111px;">Outpatient Satisfaction Rate</div>
<div style="left:400px;top:566.80px;width:60px;height:20px;line-height:20px;text-align:center;font-size:12.9px;font-weight:400;color:#000;white-space:nowrap;">%</div>
<div style="left:486px;top:566.80px;width:82px;height:20px;line-height:20px;text-align:center;font-size:12.9px;font-weight:400;color:#000;white-space:nowrap;">83%</div>
<div style="left:567px;top:566.80px;width:88px;height:20px;line-height:20px;text-align:center;font-size:12.9px;font-weight:400;color:#000;white-space:nowrap;">83%</div>
<div style="left:654px;top:566.80px;width:101px;height:20px;line-height:20px;text-align:center;font-size:12.9px;font-weight:400;color:#000;white-space:nowrap;">100</div>
<svg style="position:absolute;left:656.9px;top:569.4px" width="16" height="14" viewBox="0 0 16 13.4"><path d="M0.6 4.6 H8.4 L5 0.7 H9.6 L15.4 6.7 L9.6 12.7 H5 L8.4 8.8 H0.6 Z" fill="#f3c680" stroke="#c9983c" stroke-width="1" stroke-linejoin="round"/></svg>
<div style="left:781px;top:566.80px;width:84px;height:20px;line-height:20px;text-align:center;font-size:12.9px;font-weight:400;color:#000;white-space:nowrap;">83%</div>
<div style="left:864px;top:566.80px;width:88px;height:20px;line-height:20px;text-align:center;font-size:12.9px;font-weight:400;color:#000;white-space:nowrap;">83%</div>
<div style="left:951px;top:566.80px;width:101px;height:20px;line-height:20px;text-align:center;font-size:12.9px;font-weight:400;color:#000;white-space:nowrap;">100</div>
<svg style="position:absolute;left:953.9px;top:569.4px" width="16" height="14" viewBox="0 0 16 13.4"><path d="M0.6 4.6 H8.4 L5 0.7 H9.6 L15.4 6.7 L9.6 12.7 H5 L8.4 8.8 H0.6 Z" fill="#f3c680" stroke="#c9983c" stroke-width="1" stroke-linejoin="round"/></svg>
<div style="left:167px;top:585px;width:234px;height:19px;background:#f8cbad"></div>
<div style="left:167px;top:585.95px;width:60px;height:20px;line-height:20px;text-align:center;font-size:12.9px;font-weight:400;color:#d01414;white-space:nowrap;">8</div>
<div style="left:246.70px;top:585.95px;height:20px;line-height:20px;font-size:12.9px;color:#d01414;white-space:nowrap;letter-spacing:0.223px;">Patient Confidentiality</div>
<div style="left:400px;top:585.95px;width:60px;height:20px;line-height:20px;text-align:center;font-size:12.9px;font-weight:400;color:#000;white-space:nowrap;">%</div>
<div style="left:486px;top:585.95px;width:82px;height:20px;line-height:20px;text-align:center;font-size:12.9px;font-weight:400;color:#000;white-space:nowrap;">99%</div>
<div style="left:567px;top:585.95px;width:88px;height:20px;line-height:20px;text-align:center;font-size:12.9px;font-weight:400;color:#000;white-space:nowrap;">99%</div>
<div style="left:654px;top:585.95px;width:101px;height:20px;line-height:20px;text-align:center;font-size:12.9px;font-weight:400;color:#000;white-space:nowrap;">99</div>
<svg style="position:absolute;left:656.9px;top:588.4px" width="16" height="14" viewBox="0 0 16 13.4"><path d="M0.6 4.6 H8.4 L5 0.7 H9.6 L15.4 6.7 L9.6 12.7 H5 L8.4 8.8 H0.6 Z" fill="#f3c680" stroke="#c9983c" stroke-width="1" stroke-linejoin="round"/></svg>
<div style="left:781px;top:585.95px;width:84px;height:20px;line-height:20px;text-align:center;font-size:12.9px;font-weight:400;color:#000;white-space:nowrap;">99%</div>
<div style="left:864px;top:585.95px;width:88px;height:20px;line-height:20px;text-align:center;font-size:12.9px;font-weight:400;color:#000;white-space:nowrap;">99%</div>
<div style="left:951px;top:585.95px;width:101px;height:20px;line-height:20px;text-align:center;font-size:12.9px;font-weight:400;color:#000;white-space:nowrap;">99</div>
<svg style="position:absolute;left:953.9px;top:588.4px" width="16" height="14" viewBox="0 0 16 13.4"><path d="M0.6 4.6 H8.4 L5 0.7 H9.6 L15.4 6.7 L9.6 12.7 H5 L8.4 8.8 H0.6 Z" fill="#f3c680" stroke="#c9983c" stroke-width="1" stroke-linejoin="round"/></svg>
<div style="left:167px;top:604px;width:234px;height:19px;background:#f8cbad"></div>
<div style="left:167px;top:605.10px;width:60px;height:20px;line-height:20px;text-align:center;font-size:12.9px;font-weight:400;color:#d01414;white-space:nowrap;">9</div>
<div style="left:231.00px;top:605.10px;height:20px;line-height:20px;font-size:10.4px;color:#d01414;white-space:nowrap;letter-spacing:0.034px;"># of No Show Patients/Cancellation</div>
<div style="left:400px;top:605.10px;width:60px;height:20px;line-height:20px;text-align:center;font-size:12.9px;font-weight:400;color:#000;white-space:nowrap;">#</div>
<div style="left:486px;top:605.10px;width:82px;height:20px;line-height:20px;text-align:center;font-size:12.9px;font-weight:400;color:#000;white-space:nowrap;">100</div>
<div style="left:567px;top:605.10px;width:88px;height:20px;line-height:20px;text-align:center;font-size:12.9px;font-weight:400;color:#000;white-space:nowrap;">110</div>
<div style="left:654px;top:605.10px;width:101px;height:20px;line-height:20px;text-align:center;font-size:12.9px;font-weight:400;color:#000;white-space:nowrap;">91</div>
<svg style="position:absolute;left:656.9px;top:607.4px" width="16" height="14" viewBox="0 0 16 13.4"><path d="M0.6 4.6 H8.4 L5 0.7 H9.6 L15.4 6.7 L9.6 12.7 H5 L8.4 8.8 H0.6 Z" fill="#f3c680" stroke="#c9983c" stroke-width="1" stroke-linejoin="round"/></svg>
<div style="left:781px;top:605.10px;width:84px;height:20px;line-height:20px;text-align:center;font-size:12.9px;font-weight:400;color:#000;white-space:nowrap;">100</div>
<div style="left:864px;top:605.10px;width:88px;height:20px;line-height:20px;text-align:center;font-size:12.9px;font-weight:400;color:#000;white-space:nowrap;">110</div>
<div style="left:951px;top:605.10px;width:101px;height:20px;line-height:20px;text-align:center;font-size:12.9px;font-weight:400;color:#000;white-space:nowrap;">91</div>
<svg style="position:absolute;left:953.9px;top:607.4px" width="16" height="14" viewBox="0 0 16 13.4"><path d="M0.6 4.6 H8.4 L5 0.7 H9.6 L15.4 6.7 L9.6 12.7 H5 L8.4 8.8 H0.6 Z" fill="#f3c680" stroke="#c9983c" stroke-width="1" stroke-linejoin="round"/></svg>
<div style="left:167px;top:623px;width:234px;height:19px;background:#f8cbad"></div>
<div style="left:167px;top:624.25px;width:60px;height:20px;line-height:20px;text-align:center;font-size:12.9px;font-weight:400;color:#d01414;white-space:nowrap;">10</div>
<div style="left:229.00px;top:624.25px;height:20px;line-height:20px;font-size:10.1px;color:#d01414;white-space:nowrap;letter-spacing:0.118px;">Number of Patients per Medical Staff</div>
<div style="left:400px;top:624.25px;width:60px;height:20px;line-height:20px;text-align:center;font-size:12.9px;font-weight:400;color:#000;white-space:nowrap;">#</div>
<div style="left:486px;top:624.25px;width:82px;height:20px;line-height:20px;text-align:center;font-size:12.9px;font-weight:400;color:#000;white-space:nowrap;">18</div>
<div style="left:567px;top:624.25px;width:88px;height:20px;line-height:20px;text-align:center;font-size:12.9px;font-weight:400;color:#000;white-space:nowrap;">24</div>
<div style="left:654px;top:624.25px;width:101px;height:20px;line-height:20px;text-align:center;font-size:12.9px;font-weight:400;color:#000;white-space:nowrap;">75</div>
<svg style="position:absolute;left:657.4px;top:626.1px" width="14" height="16" viewBox="0 0 13.4 16"><g transform="translate(13.4,0) rotate(90)"><path d="M0.6 4.6 H8.4 L5 0.7 H9.6 L15.4 6.7 L9.6 12.7 H5 L8.4 8.8 H0.6 Z" fill="#dc532d" stroke="#c2441f" stroke-width="1" stroke-linejoin="round"/></g></svg>
<div style="left:781px;top:624.25px;width:84px;height:20px;line-height:20px;text-align:center;font-size:12.9px;font-weight:400;color:#000;white-space:nowrap;">18</div>
<div style="left:864px;top:624.25px;width:88px;height:20px;line-height:20px;text-align:center;font-size:12.9px;font-weight:400;color:#000;white-space:nowrap;">24</div>
<div style="left:951px;top:624.25px;width:101px;height:20px;line-height:20px;text-align:center;font-size:12.9px;font-weight:400;color:#000;white-space:nowrap;">75</div>
<svg style="position:absolute;left:954.4px;top:626.1px" width="14" height="16" viewBox="0 0 13.4 16"><g transform="translate(13.4,0) rotate(90)"><path d="M0.6 4.6 H8.4 L5 0.7 H9.6 L15.4 6.7 L9.6 12.7 H5 L8.4 8.8 H0.6 Z" fill="#dc532d" stroke="#c2441f" stroke-width="1" stroke-linejoin="round"/></g></svg>
<div style="left:167px;top:642px;width:234px;height:19px;background:#c6e0b4"></div>
<div style="left:167px;top:643.40px;width:60px;height:20px;line-height:20px;text-align:center;font-size:12.9px;font-weight:400;color:#548235;white-space:nowrap;">11</div>
<div style="left:233.40px;top:643.40px;height:20px;line-height:20px;font-size:12.9px;color:#548235;white-space:nowrap;letter-spacing:-0.042px;">Bed or Room Turnover Rate</div>
<div style="left:400px;top:643.40px;width:60px;height:20px;line-height:20px;text-align:center;font-size:12.9px;font-weight:400;color:#000;white-space:nowrap;">%</div>
<div style="left:486px;top:643.40px;width:82px;height:20px;line-height:20px;text-align:center;font-size:12.9px;font-weight:400;color:#000;white-space:nowrap;">1000%</div>
<div style="left:567px;top:643.40px;width:88px;height:20px;line-height:20px;text-align:center;font-size:12.9px;font-weight:400;color:#000;white-space:nowrap;">1250%</div>
<div style="left:654px;top:643.40px;width:101px;height:20px;line-height:20px;text-align:center;font-size:12.9px;font-weight:400;color:#000;white-space:nowrap;">125</div>
<svg style="position:absolute;left:657.4px;top:645.1px" width="14" height="16" viewBox="0 0 13.4 16"><g transform="translate(0,16) rotate(-90)"><path d="M0.6 4.6 H8.4 L5 0.7 H9.6 L15.4 6.7 L9.6 12.7 H5 L8.4 8.8 H0.6 Z" fill="#52a088" stroke="#3e8a72" stroke-width="1" stroke-linejoin="round"/></g></svg>
<div style="left:781px;top:643.40px;width:84px;height:20px;line-height:20px;text-align:center;font-size:12.9px;font-weight:400;color:#000;white-space:nowrap;">1000%</div>
<div style="left:864px;top:643.40px;width:88px;height:20px;line-height:20px;text-align:center;font-size:12.9px;font-weight:400;color:#000;white-space:nowrap;">1250%</div>
<div style="left:951px;top:643.40px;width:101px;height:20px;line-height:20px;text-align:center;font-size:12.9px;font-weight:400;color:#000;white-space:nowrap;">125</div>
<svg style="position:absolute;left:954.4px;top:645.1px" width="14" height="16" viewBox="0 0 13.4 16"><g transform="translate(0,16) rotate(-90)"><path d="M0.6 4.6 H8.4 L5 0.7 H9.6 L15.4 6.7 L9.6 12.7 H5 L8.4 8.8 H0.6 Z" fill="#52a088" stroke="#3e8a72" stroke-width="1" stroke-linejoin="round"/></g></svg>
<div style="left:167px;top:546px;width:293px;height:1px;background:#000"></div>
<div style="left:167px;top:566px;width:293px;height:1px;background:#000"></div>
<div style="left:167px;top:585px;width:293px;height:1px;background:#000"></div>
<div style="left:167px;top:604px;width:293px;height:1px;background:#000"></div>
<div style="left:167px;top:623px;width:293px;height:1px;background:#000"></div>
<div style="left:167px;top:642px;width:293px;height:1px;background:#000"></div>
<div style="left:167px;top:661px;width:293px;height:1px;background:#000"></div>
<div style="left:167px;top:681px;width:293px;height:1px;background:#000"></div>
<div style="left:167px;top:700px;width:293px;height:1px;background:#000"></div>
<div style="left:167px;top:719px;width:293px;height:1px;background:#000"></div>
<div style="left:167px;top:738px;width:293px;height:1px;background:#7030a0"></div>
<div style="left:167px;top:546px;width:1px;height:192px;background:#000"></div>
<div style="left:226px;top:546px;width:1px;height:192px;background:#000"></div>
<div style="left:400px;top:546px;width:1px;height:192px;background:#000"></div>
<div style="left:459px;top:546px;width:1px;height:192px;background:#000"></div>
<div style="left:486px;top:546px;width:269px;height:1px;background:#000"></div>
<div style="left:486px;top:566px;width:269px;height:1px;background:#000"></div>
<div style="left:486px;top:585px;width:269px;height:1px;background:#000"></div>
<div style="left:486px;top:604px;width:269px;height:1px;background:#000"></div>
<div style="left:486px;top:623px;width:269px;height:1px;background:#000"></div>
<div style="left:486px;top:642px;width:269px;height:1px;background:#000"></div>
<div style="left:486px;top:661px;width:269px;height:1px;background:#000"></div>
<div style="left:486px;top:681px;width:269px;height:1px;background:#000"></div>
<div style="left:486px;top:700px;width:269px;height:1px;background:#000"></div>
<div style="left:486px;top:719px;width:269px;height:1px;background:#000"></div>
<div style="left:486px;top:738px;width:269px;height:1px;background:#7030a0"></div>
<div style="left:486px;top:546px;width:1px;height:192px;background:#000"></div>
<div style="left:567px;top:546px;width:1px;height:192px;background:#000"></div>
<div style="left:654px;top:546px;width:1px;height:192px;background:#000"></div>
<div style="left:754px;top:546px;width:1px;height:192px;background:#000"></div>
<div style="left:781px;top:546px;width:271px;height:1px;background:#000"></div>
<div style="left:781px;top:566px;width:271px;height:1px;background:#000"></div>
<div style="left:781px;top:585px;width:271px;height:1px;background:#000"></div>
<div style="left:781px;top:604px;width:271px;height:1px;background:#000"></div>
<div style="left:781px;top:623px;width:271px;height:1px;background:#000"></div>
<div style="left:781px;top:642px;width:271px;height:1px;background:#000"></div>
<div style="left:781px;top:661px;width:271px;height:1px;background:#000"></div>
<div style="left:781px;top:681px;width:271px;height:1px;background:#000"></div>
<div style="left:781px;top:700px;width:271px;height:1px;background:#000"></div>
<div style="left:781px;top:719px;width:271px;height:1px;background:#000"></div>
<div style="left:781px;top:738px;width:271px;height:1px;background:#7030a0"></div>
<div style="left:781px;top:546px;width:1px;height:192px;background:#000"></div>
<div style="left:864px;top:546px;width:1px;height:192px;background:#000"></div>
<div style="left:951px;top:546px;width:1px;height:192px;background:#000"></div>
<div style="left:1051px;top:546px;width:1px;height:192px;background:#000"></div>
<div style="left:167px;top:739px;width:293px;height:19px;background:#bfc8d9"></div>
<div style="left:294.70px;top:739.05px;height:20px;line-height:20px;font-size:12.9px;color:#000;white-space:nowrap;font-weight:700;letter-spacing:-0.22px;transform:scaleX(0.8501);transform-origin:0 50%;">COSTS</div>
<div style="left:167px;top:757px;width:293px;height:86px;background:#fff"></div>
<div style="left:486px;top:739px;width:269px;height:19px;background:#bfc8d9"></div>
<div style="left:486px;top:757px;width:269px;height:86px;background:#fff"></div>
<div style="left:781px;top:739px;width:271px;height:19px;background:#bfc8d9"></div>
<div style="left:781px;top:757px;width:271px;height:86px;background:#fff"></div>
<div style="left:167px;top:757px;width:234px;height:19px;background:#f8cbad"></div>
<div style="left:167px;top:758.30px;width:60px;height:20px;line-height:20px;text-align:center;font-size:12.9px;font-weight:400;color:#d01414;white-space:nowrap;">12</div>
<div style="left:238.70px;top:758.30px;height:20px;line-height:20px;font-size:12.9px;color:#d01414;white-space:nowrap;letter-spacing:0.03px;">Average Treatment Costs</div>
<div style="left:400px;top:758.30px;width:60px;height:20px;line-height:20px;text-align:center;font-size:12.9px;font-weight:400;color:#000;white-space:nowrap;">USD</div>
<div style="left:486px;top:758.30px;width:82px;height:20px;line-height:20px;text-align:center;font-size:12.9px;font-weight:400;color:#000;white-space:nowrap;">6.500</div>
<div style="left:567px;top:758.30px;width:88px;height:20px;line-height:20px;text-align:center;font-size:12.9px;font-weight:400;color:#000;white-space:nowrap;">8.700</div>
<div style="left:654px;top:758.30px;width:101px;height:20px;line-height:20px;text-align:center;font-size:12.9px;font-weight:400;color:#000;white-space:nowrap;">75</div>
<svg style="position:absolute;left:657.4px;top:760.1px" width="14" height="16" viewBox="0 0 13.4 16"><g transform="translate(13.4,0) rotate(90)"><path d="M0.6 4.6 H8.4 L5 0.7 H9.6 L15.4 6.7 L9.6 12.7 H5 L8.4 8.8 H0.6 Z" fill="#dc532d" stroke="#c2441f" stroke-width="1" stroke-linejoin="round"/></g></svg>
<div style="left:781px;top:758.30px;width:84px;height:20px;line-height:20px;text-align:center;font-size:12.9px;font-weight:400;color:#000;white-space:nowrap;">6.500</div>
<div style="left:864px;top:758.30px;width:88px;height:20px;line-height:20px;text-align:center;font-size:12.9px;font-weight:400;color:#000;white-space:nowrap;">8.700</div>
<div style="left:951px;top:758.30px;width:101px;height:20px;line-height:20px;text-align:center;font-size:12.9px;font-weight:400;color:#000;white-space:nowrap;">75</div>
<svg style="position:absolute;left:954.4px;top:760.1px" width="14" height="16" viewBox="0 0 13.4 16"><g transform="translate(13.4,0) rotate(90)"><path d="M0.6 4.6 H8.4 L5 0.7 H9.6 L15.4 6.7 L9.6 12.7 H5 L8.4 8.8 H0.6 Z" fill="#dc532d" stroke="#c2441f" stroke-width="1" stroke-linejoin="round"/></g></svg>
<div style="left:167px;top:776px;width:234px;height:19px;background:#f8cbad"></div>
<div style="left:167px;top:777.45px;width:60px;height:20px;line-height:20px;text-align:center;font-size:12.9px;font-weight:400;color:#d01414;white-space:nowrap;">13</div>
<div style="left:234.00px;top:777.45px;height:20px;line-height:20px;font-size:12.9px;color:#d01414;white-space:nowrap;letter-spacing:-0.22px;transform:scaleX(0.9573);transform-origin:0 50%;">Permanent Employee Wages</div>
<div style="left:400px;top:777.45px;width:60px;height:20px;line-height:20px;text-align:center;font-size:12.9px;font-weight:400;color:#000;white-space:nowrap;">USD</div>
<div style="left:486px;top:777.45px;width:82px;height:20px;line-height:20px;text-align:center;font-size:12.9px;font-weight:400;color:#000;white-space:nowrap;">17.000</div>
<div style="left:567px;top:777.45px;width:88px;height:20px;line-height:20px;text-align:center;font-size:12.9px;font-weight:400;color:#000;white-space:nowrap;">17.300</div>
<div style="left:654px;top:777.45px;width:101px;height:20px;line-height:20px;text-align:center;font-size:12.9px;font-weight:400;color:#000;white-space:nowrap;">98</div>
<svg style="position:absolute;left:656.9px;top:779.4px" width="16" height="14" viewBox="0 0 16 13.4"><path d="M0.6 4.6 H8.4 L5 0.7 H9.6 L15.4 6.7 L9.6 12.7 H5 L8.4 8.8 H0.6 Z" fill="#f3c680" stroke="#c9983c" stroke-width="1" stroke-linejoin="round"/></svg>
<div style="left:781px;top:777.45px;width:84px;height:20px;line-height:20px;text-align:center;font-size:12.9px;font-weight:400;color:#000;white-space:nowrap;">17.000</div>
<div style="left:864px;top:777.45px;width:88px;height:20px;line-height:20px;text-align:center;font-size:12.9px;font-weight:400;color:#000;white-space:nowrap;">17.300</div>
<div style="left:951px;top:777.45px;width:101px;height:20px;line-height:20px;text-align:center;font-size:12.9px;font-weight:400;color:#000;white-space:nowrap;">98</div>
<svg style="position:absolute;left:953.9px;top:779.4px" width="16" height="14" viewBox="0 0 16 13.4"><path d="M0.6 4.6 H8.4 L5 0.7 H9.6 L15.4 6.7 L9.6 12.7 H5 L8.4 8.8 H0.6 Z" fill="#f3c680" stroke="#c9983c" stroke-width="1" stroke-linejoin="round"/></svg>
<div style="left:167px;top:795px;width:234px;height:20px;background:#f8cbad"></div>
<div style="left:167px;top:796.60px;width:60px;height:20px;line-height:20px;text-align:center;font-size:12.9px;font-weight:400;color:#d01414;white-space:nowrap;">14</div>
<div style="left:230.40px;top:796.60px;height:20px;line-height:20px;font-size:9.8px;color:#d01414;white-space:nowrap;">Avg. Insurance Claim Processing Cost</div>
<div style="left:400px;top:796.60px;width:60px;height:20px;line-height:20px;text-align:center;font-size:12.9px;font-weight:400;color:#000;white-space:nowrap;">USD</div>
<div style="left:486px;top:796.60px;width:82px;height:20px;line-height:20px;text-align:center;font-size:12.9px;font-weight:400;color:#000;white-space:nowrap;">65.000</div>
<div style="left:567px;top:796.60px;width:88px;height:20px;line-height:20px;text-align:center;font-size:12.9px;font-weight:400;color:#000;white-space:nowrap;">72.563</div>
<div style="left:654px;top:796.60px;width:101px;height:20px;line-height:20px;text-align:center;font-size:12.9px;font-weight:400;color:#000;white-space:nowrap;">90</div>
<svg style="position:absolute;left:656.9px;top:798.4px" width="16" height="14" viewBox="0 0 16 13.4"><path d="M0.6 4.6 H8.4 L5 0.7 H9.6 L15.4 6.7 L9.6 12.7 H5 L8.4 8.8 H0.6 Z" fill="#f3c680" stroke="#c9983c" stroke-width="1" stroke-linejoin="round"/></svg>
<div style="left:781px;top:796.60px;width:84px;height:20px;line-height:20px;text-align:center;font-size:12.9px;font-weight:400;color:#000;white-space:nowrap;">65.000</div>
<div style="left:864px;top:796.60px;width:88px;height:20px;line-height:20px;text-align:center;font-size:12.9px;font-weight:400;color:#000;white-space:nowrap;">72.563</div>
<div style="left:951px;top:796.60px;width:101px;height:20px;line-height:20px;text-align:center;font-size:12.9px;font-weight:400;color:#000;white-space:nowrap;">90</div>
<svg style="position:absolute;left:953.9px;top:798.4px" width="16" height="14" viewBox="0 0 16 13.4"><path d="M0.6 4.6 H8.4 L5 0.7 H9.6 L15.4 6.7 L9.6 12.7 H5 L8.4 8.8 H0.6 Z" fill="#f3c680" stroke="#c9983c" stroke-width="1" stroke-linejoin="round"/></svg>
<div style="left:167px;top:815px;width:234px;height:19px;background:#f8cbad"></div>
<div style="left:167px;top:815.75px;width:60px;height:20px;line-height:20px;text-align:center;font-size:12.9px;font-weight:400;color:#d01414;white-space:nowrap;">15</div>
<div style="left:258.10px;top:815.75px;height:20px;line-height:20px;font-size:12.9px;color:#d01414;white-space:nowrap;letter-spacing:-0.19px;">Claims Denial Rate</div>
<div style="left:400px;top:815.75px;width:60px;height:20px;line-height:20px;text-align:center;font-size:12.9px;font-weight:400;color:#000;white-space:nowrap;">%</div>
<div style="left:486px;top:815.75px;width:82px;height:20px;line-height:20px;text-align:center;font-size:12.9px;font-weight:400;color:#000;white-space:nowrap;">7%</div>
<div style="left:567px;top:815.75px;width:88px;height:20px;line-height:20px;text-align:center;font-size:12.9px;font-weight:400;color:#000;white-space:nowrap;">12%</div>
<div style="left:654px;top:815.75px;width:101px;height:20px;line-height:20px;text-align:center;font-size:12.9px;font-weight:400;color:#000;white-space:nowrap;">59</div>
<svg style="position:absolute;left:657.4px;top:818.1px" width="14" height="16" viewBox="0 0 13.4 16"><g transform="translate(13.4,0) rotate(90)"><path d="M0.6 4.6 H8.4 L5 0.7 H9.6 L15.4 6.7 L9.6 12.7 H5 L8.4 8.8 H0.6 Z" fill="#dc532d" stroke="#c2441f" stroke-width="1" stroke-linejoin="round"/></g></svg>
<div style="left:781px;top:815.75px;width:84px;height:20px;line-height:20px;text-align:center;font-size:12.9px;font-weight:400;color:#000;white-space:nowrap;">7%</div>
<div style="left:864px;top:815.75px;width:88px;height:20px;line-height:20px;text-align:center;font-size:12.9px;font-weight:400;color:#000;white-space:nowrap;">12%</div>
<div style="left:951px;top:815.75px;width:101px;height:20px;line-height:20px;text-align:center;font-size:12.9px;font-weight:400;color:#000;white-space:nowrap;">59</div>
<svg style="position:absolute;left:954.4px;top:818.1px" width="14" height="16" viewBox="0 0 13.4 16"><g transform="translate(13.4,0) rotate(90)"><path d="M0.6 4.6 H8.4 L5 0.7 H9.6 L15.4 6.7 L9.6 12.7 H5 L8.4 8.8 H0.6 Z" fill="#dc532d" stroke="#c2441f" stroke-width="1" stroke-linejoin="round"/></g></svg>
<div style="left:167px;top:757px;width:293px;height:1px;background:#000"></div>
<div style="left:167px;top:776px;width:293px;height:1px;background:#000"></div>
<div style="left:167px;top:795px;width:293px;height:1px;background:#000"></div>
<div style="left:167px;top:815px;width:293px;height:1px;background:#000"></div>
<div style="left:167px;top:834px;width:293px;height:1px;background:#000"></div>
<div style="left:167px;top:757px;width:1px;height:86px;background:#000"></div>
<div style="left:226px;top:757px;width:1px;height:86px;background:#000"></div>
<div style="left:400px;top:757px;width:1px;height:86px;background:#000"></div>
<div style="left:459px;top:757px;width:1px;height:86px;background:#000"></div>
<div style="left:486px;top:757px;width:269px;height:1px;background:#000"></div>
<div style="left:486px;top:776px;width:269px;height:1px;background:#000"></div>
<div style="left:486px;top:795px;width:269px;height:1px;background:#000"></div>
<div style="left:486px;top:815px;width:269px;height:1px;background:#000"></div>
<div style="left:486px;top:834px;width:269px;height:1px;background:#000"></div>
<div style="left:486px;top:757px;width:1px;height:86px;background:#000"></div>
<div style="left:567px;top:757px;width:1px;height:86px;background:#000"></div>
<div style="left:654px;top:757px;width:1px;height:86px;background:#000"></div>
<div style="left:754px;top:757px;width:1px;height:86px;background:#000"></div>
<div style="left:781px;top:757px;width:271px;height:1px;background:#000"></div>
<div style="left:781px;top:776px;width:271px;height:1px;background:#000"></div>
<div style="left:781px;top:795px;width:271px;height:1px;background:#000"></div>
<div style="left:781px;top:815px;width:271px;height:1px;background:#000"></div>
<div style="left:781px;top:834px;width:271px;height:1px;background:#000"></div>
<div style="left:781px;top:757px;width:1px;height:86px;background:#000"></div>
<div style="left:864px;top:757px;width:1px;height:86px;background:#000"></div>
<div style="left:951px;top:757px;width:1px;height:86px;background:#000"></div>
<div style="left:1051px;top:757px;width:1px;height:86px;background:#000"></div>
<div style="left:567px;top:232px;width:205.5px;height:51px;background:#fff;border:1px solid #000;overflow:hidden"><div style="left:1px;top:1px;width:201.5px;height:11.6px;background:#0a6cd6"></div><div class="dd" style="top:0.4px;color:#fff">According to Monthly Index</div><div class="dd" style="top:13px">According to Cumulative Index</div><div class="dd" style="top:25.5px">According to Both</div><div class="dd" style="top:38px">Do not highligt</div></div>
<div style="left:1084px;top:395px;width:218.5px;height:246.5px;background:#d6dce8;border:1px solid #b9bdc6;box-shadow:0 0 4px 1px rgba(0,0,0,.38),2px 2px 3px rgba(0,0,0,.3)"></div>
<div style="left:1087.70px;top:398.90px;height:20px;line-height:20px;font-size:11.2px;color:#111;white-space:nowrap;font-weight:700;font-style:italic;letter-spacing:-0.22px;transform:scaleX(0.9597);transform-origin:0 50%;">DASHBOARD</div>
<div style="left:1088.1px;top:441.3px;width:3.1px;height:3.1px;background:#222;border-radius:50%"></div>
<div style="left:1098.20px;top:432.60px;height:20px;line-height:20px;font-size:11.2px;color:#1a1a1a;white-space:nowrap;font-style:italic;letter-spacing:0.143px;">Choose the month that you would like</div>
<div style="left:1098.20px;top:446.40px;height:20px;line-height:20px;font-size:11.2px;color:#1a1a1a;white-space:nowrap;font-style:italic;letter-spacing:0.192px;">to display it&#x27;s properties from the cell</div>
<div style="left:1098.20px;top:460.20px;height:20px;line-height:20px;font-size:11.2px;color:#1a1a1a;white-space:nowrap;font-style:italic;letter-spacing:0.226px;">where blue arrow points.</div>
<div style="left:1088.1px;top:487.5px;width:3.1px;height:3.1px;background:#222;border-radius:50%"></div>
<div style="left:1098.20px;top:478.80px;height:20px;line-height:20px;font-size:11.2px;color:#1a1a1a;white-space:nowrap;font-style:italic;letter-spacing:0.072px;">Once selected the calculations will be</div>
<div style="left:1098.20px;top:492.60px;height:20px;line-height:20px;font-size:11.2px;color:#1a1a1a;white-space:nowrap;font-style:italic;letter-spacing:0.22px;">done automatically. The one with the</div>
<div style="left:1098.20px;top:506.40px;height:20px;line-height:20px;font-size:11.2px;color:#1a1a1a;white-space:nowrap;font-style:italic;letter-spacing:0.129px;">lower better cases (which you stated in</div>
<div style="left:1098.20px;top:520.20px;height:20px;line-height:20px;font-size:11.2px;color:#1a1a1a;white-space:nowrap;font-style:italic;letter-spacing:0.156px;">settings &gt; Metric info section ) will be</div>
<div style="left:1098.20px;top:533.60px;height:20px;line-height:20px;font-size:11.2px;color:#1a1a1a;white-space:nowrap;font-style:italic;letter-spacing:0.214px;">calculated distinctively.</div>
<div style="left:1088.1px;top:561.3000000000001px;width:3.1px;height:3.1px;background:#222;border-radius:50%"></div>
<div style="left:1098.20px;top:552.60px;height:20px;line-height:20px;font-size:11.2px;color:#1a1a1a;white-space:nowrap;font-style:italic;letter-spacing:0.117px;">You may change the name of the</div>
<div style="left:1098.20px;top:566.20px;height:20px;line-height:20px;font-size:11.2px;color:#1a1a1a;white-space:nowrap;font-style:italic;letter-spacing:0.137px;">categories.</div>
<div style="left:1088.1px;top:593.7px;width:3.1px;height:3.1px;background:#222;border-radius:50%"></div>
<div style="left:1098.20px;top:585.00px;height:20px;line-height:20px;font-size:11.2px;color:#1a1a1a;white-space:nowrap;font-style:italic;letter-spacing:0.184px;">If there is no proper format on the cell</div>
<div style="left:1098.20px;top:598.80px;height:20px;line-height:20px;font-size:11.2px;color:#1a1a1a;white-space:nowrap;font-style:italic;letter-spacing:0.055px;">you may select the cell and change its</div>
<div style="left:1098.20px;top:612.80px;height:20px;line-height:20px;font-size:11.2px;color:#1a1a1a;white-space:nowrap;font-style:italic;letter-spacing:0.545px;">format.</div>
<!--SHEET_END-->
<div style="left:0px;top:843px;width:1600px;height:33px;background:#e6e6e6"></div>
<svg style="position:absolute;left:25px;top:853px" width="10" height="12" viewBox="0 0 10 12"><path d="M7.4 1 L2.4 6 L7.4 11" fill="none" stroke="#444" stroke-width="1.2"/></svg>
<svg style="position:absolute;left:58px;top:853px" width="10" height="12" viewBox="0 0 10 12"><path d="M2.6 1 L7.6 6 L2.6 11" fill="none" stroke="#9a9a9a" stroke-width="1.2"/></svg>
<div style="left:90.3px;top:858px;width:2.5px;height:2.5px;background:#333;border-radius:50%"></div>
<div style="left:94.3px;top:858px;width:2.5px;height:2.5px;background:#333;border-radius:50%"></div>
<div style="left:98.3px;top:858px;width:2.5px;height:2.5px;background:#333;border-radius:50%"></div>
<div style="left:117.5px;top:847.5px;width:126.5px;height:24.5px;background:#dce3f5;border-radius:4px"></div>
<div style="left:127.70px;top:850.00px;height:20px;line-height:20px;font-size:15px;color:#1a1a1a;white-space:nowrap;letter-spacing:-0.22px;transform:scaleX(0.9634);transform-origin:0 50%;">Target_Database</div>
<div style="left:248px;top:851px;width:1px;height:18px;background:#d0d0d0"></div>
<div style="left:253.5px;top:847.5px;width:138.5px;height:24.5px;background:#a6a6a6;border-radius:4px"></div>
<div style="left:263.20px;top:850.00px;height:20px;line-height:20px;font-size:15px;color:#111;white-space:nowrap;letter-spacing:-0.404px;">Cumulative_Actual</div>
<div style="left:397px;top:851px;width:1px;height:18px;background:#d0d0d0"></div>
<div style="left:402px;top:847.5px;width:139.8px;height:24.5px;background:#a6a6a6;border-radius:4px"></div>
<div style="left:412.20px;top:850.00px;height:20px;line-height:20px;font-size:15px;color:#111;white-space:nowrap;letter-spacing:-0.323px;">Cumulative_Target</div>
<div style="left:546px;top:851px;width:1px;height:18px;background:#d0d0d0"></div>
<div style="left:550.8px;top:847.5px;width:119.2px;height:24.5px;background:#7030a0;border-radius:4px"></div>
<div style="left:560.70px;top:850.00px;height:20px;line-height:20px;font-size:15px;color:#fff;white-space:nowrap;letter-spacing:-0.22px;transform:scaleX(0.972);transform-origin:0 50%;">Metric_Analysis</div>
<div style="left:674.5px;top:851px;width:1px;height:18px;background:#d0d0d0"></div>
<div style="left:678.8px;top:843px;width:117.5px;height:29.5px;background:linear-gradient(#fff 20%,#fdf6dd);border-radius:0 0 5px 5px"></div>
<svg style="position:absolute;left:674.8px;top:843px" width="4" height="4" viewBox="0 0 4 4"><path d="M0 0 H4 V4 Q4 0 0 0 Z" fill="#fff"/></svg>
<svg style="position:absolute;left:796.3px;top:843px" width="4" height="4" viewBox="0 0 4 4"><path d="M4 0 H0 V4 Q0 0 4 0 Z" fill="#fff"/></svg>
<div style="left:687.70px;top:847.50px;height:20px;line-height:20px;font-size:15px;color:#111;white-space:nowrap;letter-spacing:-0.334px;">Kpi_Dashboard</div>
<div style="left:688px;top:868px;width:99px;height:1.6px;background:#107c41"></div>
<div style="left:800.8px;top:850px;width:1px;height:19px;background:#d0d0d0"></div>
<div style="left:814.70px;top:850.50px;height:20px;line-height:20px;font-size:15px;color:#333;white-space:nowrap;letter-spacing:-0.22px;transform:scaleX(0.9753);transform-origin:0 50%;">ToU</div>
<div style="left:853px;top:850px;width:1px;height:19px;background:#d0d0d0"></div>
<svg style="position:absolute;left:896px;top:853px" width="13" height="13" viewBox="0 0 13 13"><path d="M6.5 0.5 V12.5 M0.5 6.5 H12.5" stroke="#8a8a8a" stroke-width="1.1"/></svg>
<div style="left:962px;top:855.5px;width:2.2px;height:2.2px;background:#333;border-radius:50%"></div>
<div style="left:962px;top:859.7px;width:2.2px;height:2.2px;background:#333;border-radius:50%"></div>
<div style="left:962px;top:863.9px;width:2.2px;height:2.2px;background:#333;border-radius:50%"></div>
<div style="left:980px;top:851px;width:599px;height:17.3px;background:#f5f5f5;border-radius:9px"></div>
<svg style="position:absolute;left:985px;top:855px" width="8" height="10" viewBox="0 0 8 10"><path d="M1 5 L6.6 0.8 V9.2 Z" fill="#666" stroke="#666" stroke-width=".8" stroke-linejoin="round"/></svg>
<div style="left:997.5px;top:855px;width:334.3px;height:9.5px;background:#6f6f6f;border-radius:5px"></div>
<svg style="position:absolute;left:1567px;top:855px" width="8" height="10" viewBox="0 0 8 10"><path d="M7 5 L1.4 0.8 V9.2 Z" fill="#666" stroke="#666" stroke-width=".8" stroke-linejoin="round"/></svg>
<div style="left:1581px;top:158px;width:17.5px;height:688px;background:#f6f6f6;border-radius:9px"></div>
<svg style="position:absolute;left:1585px;top:161px" width="10" height="8" viewBox="0 0 10 8"><path d="M5 1 L9.2 6.6 H0.8 Z" fill="#666" stroke="#666" stroke-width=".8" stroke-linejoin="round"/></svg>
<div style="left:1584.5px;top:174.5px;width:9.5px;height:325.5px;background:#6f6f6f;border-radius:5px"></div>
<svg style="position:absolute;left:1584.5px;top:832px" width="10" height="8" viewBox="0 0 10 8"><path d="M5 7 L9.2 1.4 H0.8 Z" fill="#666" stroke="#666" stroke-width=".8" stroke-linejoin="round"/></svg>
<div style="left:0px;top:876px;width:1600px;height:24px;background:#f3f3f3;border-top:1px solid #f9f9f9"></div>
<div style="left:7.20px;top:878.50px;height:20px;line-height:20px;font-size:11.6px;color:#333;white-space:nowrap;letter-spacing:-0.22px;transform:scaleX(0.9376);transform-origin:0 50%;">Ready</div>
<svg style="position:absolute;left:57px;top:881px" width="17" height="15" viewBox="0 0 17 15"><path d="M6.4 13.6 H1.2 V1.4 H15.2 V5.4 M1.2 4 H15.2" fill="none" stroke="#444" stroke-width="1.1"/><path d="M3.4 6.6 H6 M3.4 9 H5.4 M3.4 11.4 H5.4" stroke="#444" stroke-width="1"/><circle cx="11" cy="10" r="3.7" fill="none" stroke="#444" stroke-width="1.1"/><circle cx="11" cy="10" r="1.7" fill="#444"/></svg>
<svg style="position:absolute;left:90px;top:880px" width="18" height="18" viewBox="0 0 18 18"><circle cx="7" cy="2.8" r="1.7" fill="none" stroke="#444" stroke-width="1"/><path d="M1.4 5.2 Q2.4 4.4 3.6 5 L5.6 6 H8.4 L10.4 5 Q11.6 4.4 12.6 5.2 Q12.8 6.4 11.6 7 L9.4 8 V10 L11.2 15.4 Q10.6 16.6 9.6 16.2 L7 11.4 L4.4 16.2 Q3.4 16.6 2.8 15.4 L4.6 10 V8 L2.4 7 Q1.2 6.4 1.4 5.2 Z" fill="none" stroke="#444" stroke-width="1" stroke-linejoin="round"/><path d="M10.6 11 L16.2 16.6 M16.2 11 L10.6 16.6" stroke="#444" stroke-width="1.1"/></svg>
<div style="left:109.70px;top:878.50px;height:20px;line-height:20px;font-size:11.6px;color:#333;white-space:nowrap;letter-spacing:-0.22px;transform:scaleX(0.9579);transform-origin:0 50%;">Accessibility: Investigate</div>
<div style="left:1290px;top:877px;width:41.8px;height:23px;background:#dcdcdc"></div>
<svg style="position:absolute;left:1303px;top:881px" width="15" height="15" viewBox="0 0 15 15"><path d="M0.8 0.8 H14 V13.8 H0.8 Z M0.8 5.1 H14 M0.8 9.5 H14 M5.2 0.8 V13.8 M9.6 0.8 V13.8" fill="none" stroke="#333" stroke-width="1.15"/></svg>
<svg style="position:absolute;left:1345px;top:881px" width="16" height="15" viewBox="0 0 16 15"><rect x="0.8" y="0.8" width="14.2" height="13" fill="none" stroke="#333" stroke-width="1.1"/><rect x="3.8" y="3" width="8.2" height="8.8" fill="none" stroke="#333" stroke-width="1"/><path d="M5.6 5.4 H10.2 M5.6 7.4 H10.2 M5.6 9.4 H10.2" stroke="#333" stroke-width=".9"/></svg>
<svg style="position:absolute;left:1387px;top:880px" width="16" height="16" viewBox="0 0 16 16"><path d="M0.8 0.8 H14.6 V14.6 H0.8 Z" fill="none" stroke="#333" stroke-width="1.1"/><path d="M3.4 0.8 V7.6 H9.6 V0.8 M9.6 7.6 H14.6" fill="none" stroke="#333" stroke-width="1.1"/></svg>
<div style="left:1421px;top:887.6px;width:7.5px;height:1.1px;background:#444"></div>
<div style="left:1434px;top:887.8px;width:104px;height:1px;background:#777"></div>
<div style="left:1478px;top:882.5px;width:5.2px;height:11.5px;background:#5e5e5e;border-radius:1px"></div>
<div style="left:1486px;top:884.5px;width:1px;height:8px;background:#777"></div>
<div style="left:1544px;top:887.6px;width:7.5px;height:1.1px;background:#444"></div>
<div style="left:1547.2px;top:884.4px;width:1.1px;height:7.5px;background:#444"></div>
<div style="left:1565.20px;top:878.50px;height:20px;line-height:20px;font-size:11.6px;color:#333;white-space:nowrap;letter-spacing:-0.22px;transform:scaleX(0.9263);transform-origin:0 50%;">%90</div>
</body></html>
